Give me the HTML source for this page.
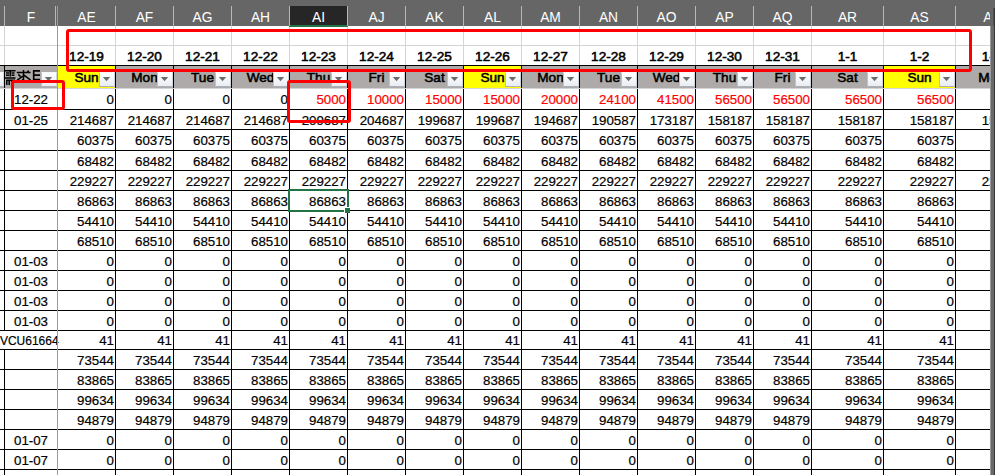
<!DOCTYPE html>
<html><head><meta charset="utf-8"><style>
html,body{margin:0;padding:0;}
body{width:995px;height:475px;overflow:hidden;background:#fff;position:relative;font-family:"Liberation Sans",sans-serif;}
.r{position:absolute;}
.t{position:absolute;white-space:nowrap;}
.d{-webkit-text-stroke:0.2px currentColor;}
.sb{font-weight:normal!important;-webkit-text-stroke:0.55px currentColor;}
.btn{position:absolute;width:14px;height:13px;border:1px solid #bcc2cc;border-top-color:#f4f6f9;border-right-color:#d0d5dd;border-bottom-color:#aab1bc;background:linear-gradient(#ffffff,#e9edf3);}
.tri{position:absolute;left:3.5px;top:4px;width:0;height:0;border-left:3.5px solid transparent;border-right:3.5px solid transparent;border-top:4.5px solid #6d6d6d;}
</style></head><body>
<div class="r" style="left:0px;top:45px;width:995px;height:1px;background:#d4d4d4;"></div>
<div class="r" style="left:4px;top:26px;width:1px;height:39px;background:#d4d4d4;"></div>
<div class="r" style="left:57px;top:26px;width:1px;height:39px;background:#d4d4d4;"></div>
<div class="r" style="left:115px;top:26px;width:1px;height:39px;background:#d4d4d4;"></div>
<div class="r" style="left:173px;top:26px;width:1px;height:39px;background:#d4d4d4;"></div>
<div class="r" style="left:231px;top:26px;width:1px;height:39px;background:#d4d4d4;"></div>
<div class="r" style="left:289px;top:26px;width:1px;height:39px;background:#d4d4d4;"></div>
<div class="r" style="left:347px;top:26px;width:1px;height:39px;background:#d4d4d4;"></div>
<div class="r" style="left:405px;top:26px;width:1px;height:39px;background:#d4d4d4;"></div>
<div class="r" style="left:463px;top:26px;width:1px;height:39px;background:#d4d4d4;"></div>
<div class="r" style="left:521px;top:26px;width:1px;height:39px;background:#d4d4d4;"></div>
<div class="r" style="left:579px;top:26px;width:1px;height:39px;background:#d4d4d4;"></div>
<div class="r" style="left:637px;top:26px;width:1px;height:39px;background:#d4d4d4;"></div>
<div class="r" style="left:695px;top:26px;width:1px;height:39px;background:#d4d4d4;"></div>
<div class="r" style="left:753px;top:26px;width:1px;height:39px;background:#d4d4d4;"></div>
<div class="r" style="left:811px;top:26px;width:1px;height:39px;background:#d4d4d4;"></div>
<div class="r" style="left:883px;top:26px;width:1px;height:39px;background:#d4d4d4;"></div>
<div class="r" style="left:955px;top:26px;width:1px;height:39px;background:#d4d4d4;"></div>
<div class="r" style="left:0px;top:65px;width:995px;height:1px;background:#000;"></div>
<div class="r" style="left:0px;top:66px;width:995px;height:22px;background:#aeaaa9;"></div>
<div class="r" style="left:0px;top:88px;width:995px;height:1px;background:#d4d4d4;"></div>
<div class="r" style="left:58px;top:66px;width:57px;height:22px;background:#ffff00;"></div>
<div class="r" style="left:464px;top:66px;width:57px;height:22px;background:#ffff00;"></div>
<div class="r" style="left:884px;top:66px;width:71px;height:22px;background:#ffff00;"></div>
<div class="r" style="left:4px;top:65px;width:1px;height:23px;background:#000;"></div>
<div class="r" style="left:57px;top:65px;width:1px;height:23px;background:#000;"></div>
<div class="r" style="left:115px;top:65px;width:1px;height:23px;background:#000;"></div>
<div class="r" style="left:173px;top:65px;width:1px;height:23px;background:#000;"></div>
<div class="r" style="left:231px;top:65px;width:1px;height:23px;background:#000;"></div>
<div class="r" style="left:289px;top:65px;width:1px;height:23px;background:#000;"></div>
<div class="r" style="left:347px;top:65px;width:1px;height:23px;background:#000;"></div>
<div class="r" style="left:405px;top:65px;width:1px;height:23px;background:#000;"></div>
<div class="r" style="left:463px;top:65px;width:1px;height:23px;background:#000;"></div>
<div class="r" style="left:521px;top:65px;width:1px;height:23px;background:#000;"></div>
<div class="r" style="left:579px;top:65px;width:1px;height:23px;background:#000;"></div>
<div class="r" style="left:637px;top:65px;width:1px;height:23px;background:#000;"></div>
<div class="r" style="left:695px;top:65px;width:1px;height:23px;background:#000;"></div>
<div class="r" style="left:753px;top:65px;width:1px;height:23px;background:#000;"></div>
<div class="r" style="left:811px;top:65px;width:1px;height:23px;background:#000;"></div>
<div class="r" style="left:883px;top:65px;width:1px;height:23px;background:#000;"></div>
<div class="r" style="left:955px;top:65px;width:1px;height:23px;background:#000;"></div>
<div class="r" style="left:0px;top:109px;width:995px;height:1px;background:#000;"></div>
<div class="r" style="left:0px;top:129px;width:995px;height:1px;background:#000;"></div>
<div class="r" style="left:0px;top:150px;width:995px;height:1px;background:#000;"></div>
<div class="r" style="left:0px;top:170px;width:995px;height:1px;background:#000;"></div>
<div class="r" style="left:0px;top:190px;width:995px;height:1px;background:#000;"></div>
<div class="r" style="left:0px;top:210px;width:995px;height:1px;background:#000;"></div>
<div class="r" style="left:0px;top:230px;width:995px;height:1px;background:#000;"></div>
<div class="r" style="left:0px;top:250px;width:995px;height:1px;background:#000;"></div>
<div class="r" style="left:0px;top:270px;width:995px;height:1px;background:#000;"></div>
<div class="r" style="left:0px;top:290px;width:995px;height:1px;background:#000;"></div>
<div class="r" style="left:0px;top:310px;width:995px;height:1px;background:#000;"></div>
<div class="r" style="left:0px;top:330px;width:995px;height:1px;background:#000;"></div>
<div class="r" style="left:0px;top:349px;width:995px;height:1px;background:#000;"></div>
<div class="r" style="left:0px;top:369px;width:995px;height:1px;background:#000;"></div>
<div class="r" style="left:0px;top:389px;width:995px;height:1px;background:#000;"></div>
<div class="r" style="left:0px;top:409px;width:995px;height:1px;background:#000;"></div>
<div class="r" style="left:0px;top:429px;width:995px;height:1px;background:#000;"></div>
<div class="r" style="left:0px;top:449px;width:995px;height:1px;background:#000;"></div>
<div class="r" style="left:0px;top:469px;width:995px;height:1px;background:#000;"></div>
<div class="r" style="left:4px;top:89px;width:1px;height:21px;background:#000;"></div>
<div class="r" style="left:57px;top:89px;width:1px;height:21px;background:#000;"></div>
<div class="r" style="left:115px;top:89px;width:1px;height:21px;background:#000;"></div>
<div class="r" style="left:173px;top:89px;width:1px;height:21px;background:#000;"></div>
<div class="r" style="left:231px;top:89px;width:1px;height:21px;background:#000;"></div>
<div class="r" style="left:289px;top:89px;width:1px;height:21px;background:#000;"></div>
<div class="r" style="left:347px;top:89px;width:1px;height:21px;background:#000;"></div>
<div class="r" style="left:405px;top:89px;width:1px;height:21px;background:#000;"></div>
<div class="r" style="left:463px;top:89px;width:1px;height:21px;background:#000;"></div>
<div class="r" style="left:521px;top:89px;width:1px;height:21px;background:#000;"></div>
<div class="r" style="left:579px;top:89px;width:1px;height:21px;background:#000;"></div>
<div class="r" style="left:637px;top:89px;width:1px;height:21px;background:#000;"></div>
<div class="r" style="left:695px;top:89px;width:1px;height:21px;background:#000;"></div>
<div class="r" style="left:753px;top:89px;width:1px;height:21px;background:#000;"></div>
<div class="r" style="left:811px;top:89px;width:1px;height:21px;background:#000;"></div>
<div class="r" style="left:883px;top:89px;width:1px;height:21px;background:#000;"></div>
<div class="r" style="left:955px;top:89px;width:1px;height:21px;background:#000;"></div>
<div class="r" style="left:4px;top:109px;width:1px;height:21px;background:#000;"></div>
<div class="r" style="left:57px;top:109px;width:1px;height:21px;background:#000;"></div>
<div class="r" style="left:115px;top:109px;width:1px;height:21px;background:#000;"></div>
<div class="r" style="left:173px;top:109px;width:1px;height:21px;background:#000;"></div>
<div class="r" style="left:231px;top:109px;width:1px;height:21px;background:#000;"></div>
<div class="r" style="left:289px;top:109px;width:1px;height:21px;background:#000;"></div>
<div class="r" style="left:347px;top:109px;width:1px;height:21px;background:#000;"></div>
<div class="r" style="left:405px;top:109px;width:1px;height:21px;background:#000;"></div>
<div class="r" style="left:463px;top:109px;width:1px;height:21px;background:#000;"></div>
<div class="r" style="left:521px;top:109px;width:1px;height:21px;background:#000;"></div>
<div class="r" style="left:579px;top:109px;width:1px;height:21px;background:#000;"></div>
<div class="r" style="left:637px;top:109px;width:1px;height:21px;background:#000;"></div>
<div class="r" style="left:695px;top:109px;width:1px;height:21px;background:#000;"></div>
<div class="r" style="left:753px;top:109px;width:1px;height:21px;background:#000;"></div>
<div class="r" style="left:811px;top:109px;width:1px;height:21px;background:#000;"></div>
<div class="r" style="left:883px;top:109px;width:1px;height:21px;background:#000;"></div>
<div class="r" style="left:955px;top:109px;width:1px;height:21px;background:#000;"></div>
<div class="r" style="left:4px;top:129px;width:1px;height:22px;background:#000;"></div>
<div class="r" style="left:57px;top:129px;width:1px;height:22px;background:#000;"></div>
<div class="r" style="left:115px;top:129px;width:1px;height:22px;background:#000;"></div>
<div class="r" style="left:173px;top:129px;width:1px;height:22px;background:#000;"></div>
<div class="r" style="left:231px;top:129px;width:1px;height:22px;background:#000;"></div>
<div class="r" style="left:289px;top:129px;width:1px;height:22px;background:#000;"></div>
<div class="r" style="left:347px;top:129px;width:1px;height:22px;background:#000;"></div>
<div class="r" style="left:405px;top:129px;width:1px;height:22px;background:#000;"></div>
<div class="r" style="left:463px;top:129px;width:1px;height:22px;background:#000;"></div>
<div class="r" style="left:521px;top:129px;width:1px;height:22px;background:#000;"></div>
<div class="r" style="left:579px;top:129px;width:1px;height:22px;background:#000;"></div>
<div class="r" style="left:637px;top:129px;width:1px;height:22px;background:#000;"></div>
<div class="r" style="left:695px;top:129px;width:1px;height:22px;background:#000;"></div>
<div class="r" style="left:753px;top:129px;width:1px;height:22px;background:#000;"></div>
<div class="r" style="left:811px;top:129px;width:1px;height:22px;background:#000;"></div>
<div class="r" style="left:883px;top:129px;width:1px;height:22px;background:#000;"></div>
<div class="r" style="left:955px;top:129px;width:1px;height:22px;background:#000;"></div>
<div class="r" style="left:4px;top:150px;width:1px;height:21px;background:#000;"></div>
<div class="r" style="left:57px;top:150px;width:1px;height:21px;background:#000;"></div>
<div class="r" style="left:115px;top:150px;width:1px;height:21px;background:#000;"></div>
<div class="r" style="left:173px;top:150px;width:1px;height:21px;background:#000;"></div>
<div class="r" style="left:231px;top:150px;width:1px;height:21px;background:#000;"></div>
<div class="r" style="left:289px;top:150px;width:1px;height:21px;background:#000;"></div>
<div class="r" style="left:347px;top:150px;width:1px;height:21px;background:#000;"></div>
<div class="r" style="left:405px;top:150px;width:1px;height:21px;background:#000;"></div>
<div class="r" style="left:463px;top:150px;width:1px;height:21px;background:#000;"></div>
<div class="r" style="left:521px;top:150px;width:1px;height:21px;background:#000;"></div>
<div class="r" style="left:579px;top:150px;width:1px;height:21px;background:#000;"></div>
<div class="r" style="left:637px;top:150px;width:1px;height:21px;background:#000;"></div>
<div class="r" style="left:695px;top:150px;width:1px;height:21px;background:#000;"></div>
<div class="r" style="left:753px;top:150px;width:1px;height:21px;background:#000;"></div>
<div class="r" style="left:811px;top:150px;width:1px;height:21px;background:#000;"></div>
<div class="r" style="left:883px;top:150px;width:1px;height:21px;background:#000;"></div>
<div class="r" style="left:955px;top:150px;width:1px;height:21px;background:#000;"></div>
<div class="r" style="left:4px;top:170px;width:1px;height:21px;background:#000;"></div>
<div class="r" style="left:57px;top:170px;width:1px;height:21px;background:#000;"></div>
<div class="r" style="left:115px;top:170px;width:1px;height:21px;background:#000;"></div>
<div class="r" style="left:173px;top:170px;width:1px;height:21px;background:#000;"></div>
<div class="r" style="left:231px;top:170px;width:1px;height:21px;background:#000;"></div>
<div class="r" style="left:289px;top:170px;width:1px;height:21px;background:#000;"></div>
<div class="r" style="left:347px;top:170px;width:1px;height:21px;background:#000;"></div>
<div class="r" style="left:405px;top:170px;width:1px;height:21px;background:#000;"></div>
<div class="r" style="left:463px;top:170px;width:1px;height:21px;background:#000;"></div>
<div class="r" style="left:521px;top:170px;width:1px;height:21px;background:#000;"></div>
<div class="r" style="left:579px;top:170px;width:1px;height:21px;background:#000;"></div>
<div class="r" style="left:637px;top:170px;width:1px;height:21px;background:#000;"></div>
<div class="r" style="left:695px;top:170px;width:1px;height:21px;background:#000;"></div>
<div class="r" style="left:753px;top:170px;width:1px;height:21px;background:#000;"></div>
<div class="r" style="left:811px;top:170px;width:1px;height:21px;background:#000;"></div>
<div class="r" style="left:883px;top:170px;width:1px;height:21px;background:#000;"></div>
<div class="r" style="left:955px;top:170px;width:1px;height:21px;background:#000;"></div>
<div class="r" style="left:4px;top:190px;width:1px;height:21px;background:#000;"></div>
<div class="r" style="left:57px;top:190px;width:1px;height:21px;background:#000;"></div>
<div class="r" style="left:115px;top:190px;width:1px;height:21px;background:#000;"></div>
<div class="r" style="left:173px;top:190px;width:1px;height:21px;background:#000;"></div>
<div class="r" style="left:231px;top:190px;width:1px;height:21px;background:#000;"></div>
<div class="r" style="left:289px;top:190px;width:1px;height:21px;background:#000;"></div>
<div class="r" style="left:347px;top:190px;width:1px;height:21px;background:#000;"></div>
<div class="r" style="left:405px;top:190px;width:1px;height:21px;background:#000;"></div>
<div class="r" style="left:463px;top:190px;width:1px;height:21px;background:#000;"></div>
<div class="r" style="left:521px;top:190px;width:1px;height:21px;background:#000;"></div>
<div class="r" style="left:579px;top:190px;width:1px;height:21px;background:#000;"></div>
<div class="r" style="left:637px;top:190px;width:1px;height:21px;background:#000;"></div>
<div class="r" style="left:695px;top:190px;width:1px;height:21px;background:#000;"></div>
<div class="r" style="left:753px;top:190px;width:1px;height:21px;background:#000;"></div>
<div class="r" style="left:811px;top:190px;width:1px;height:21px;background:#000;"></div>
<div class="r" style="left:883px;top:190px;width:1px;height:21px;background:#000;"></div>
<div class="r" style="left:955px;top:190px;width:1px;height:21px;background:#000;"></div>
<div class="r" style="left:4px;top:210px;width:1px;height:21px;background:#000;"></div>
<div class="r" style="left:57px;top:210px;width:1px;height:21px;background:#000;"></div>
<div class="r" style="left:115px;top:210px;width:1px;height:21px;background:#000;"></div>
<div class="r" style="left:173px;top:210px;width:1px;height:21px;background:#000;"></div>
<div class="r" style="left:231px;top:210px;width:1px;height:21px;background:#000;"></div>
<div class="r" style="left:289px;top:210px;width:1px;height:21px;background:#000;"></div>
<div class="r" style="left:347px;top:210px;width:1px;height:21px;background:#000;"></div>
<div class="r" style="left:405px;top:210px;width:1px;height:21px;background:#000;"></div>
<div class="r" style="left:463px;top:210px;width:1px;height:21px;background:#000;"></div>
<div class="r" style="left:521px;top:210px;width:1px;height:21px;background:#000;"></div>
<div class="r" style="left:579px;top:210px;width:1px;height:21px;background:#000;"></div>
<div class="r" style="left:637px;top:210px;width:1px;height:21px;background:#000;"></div>
<div class="r" style="left:695px;top:210px;width:1px;height:21px;background:#000;"></div>
<div class="r" style="left:753px;top:210px;width:1px;height:21px;background:#000;"></div>
<div class="r" style="left:811px;top:210px;width:1px;height:21px;background:#000;"></div>
<div class="r" style="left:883px;top:210px;width:1px;height:21px;background:#000;"></div>
<div class="r" style="left:955px;top:210px;width:1px;height:21px;background:#000;"></div>
<div class="r" style="left:4px;top:230px;width:1px;height:21px;background:#000;"></div>
<div class="r" style="left:57px;top:230px;width:1px;height:21px;background:#000;"></div>
<div class="r" style="left:115px;top:230px;width:1px;height:21px;background:#000;"></div>
<div class="r" style="left:173px;top:230px;width:1px;height:21px;background:#000;"></div>
<div class="r" style="left:231px;top:230px;width:1px;height:21px;background:#000;"></div>
<div class="r" style="left:289px;top:230px;width:1px;height:21px;background:#000;"></div>
<div class="r" style="left:347px;top:230px;width:1px;height:21px;background:#000;"></div>
<div class="r" style="left:405px;top:230px;width:1px;height:21px;background:#000;"></div>
<div class="r" style="left:463px;top:230px;width:1px;height:21px;background:#000;"></div>
<div class="r" style="left:521px;top:230px;width:1px;height:21px;background:#000;"></div>
<div class="r" style="left:579px;top:230px;width:1px;height:21px;background:#000;"></div>
<div class="r" style="left:637px;top:230px;width:1px;height:21px;background:#000;"></div>
<div class="r" style="left:695px;top:230px;width:1px;height:21px;background:#000;"></div>
<div class="r" style="left:753px;top:230px;width:1px;height:21px;background:#000;"></div>
<div class="r" style="left:811px;top:230px;width:1px;height:21px;background:#000;"></div>
<div class="r" style="left:883px;top:230px;width:1px;height:21px;background:#000;"></div>
<div class="r" style="left:955px;top:230px;width:1px;height:21px;background:#000;"></div>
<div class="r" style="left:4px;top:250px;width:1px;height:21px;background:#000;"></div>
<div class="r" style="left:57px;top:250px;width:1px;height:21px;background:#000;"></div>
<div class="r" style="left:115px;top:250px;width:1px;height:21px;background:#000;"></div>
<div class="r" style="left:173px;top:250px;width:1px;height:21px;background:#000;"></div>
<div class="r" style="left:231px;top:250px;width:1px;height:21px;background:#000;"></div>
<div class="r" style="left:289px;top:250px;width:1px;height:21px;background:#000;"></div>
<div class="r" style="left:347px;top:250px;width:1px;height:21px;background:#000;"></div>
<div class="r" style="left:405px;top:250px;width:1px;height:21px;background:#000;"></div>
<div class="r" style="left:463px;top:250px;width:1px;height:21px;background:#000;"></div>
<div class="r" style="left:521px;top:250px;width:1px;height:21px;background:#000;"></div>
<div class="r" style="left:579px;top:250px;width:1px;height:21px;background:#000;"></div>
<div class="r" style="left:637px;top:250px;width:1px;height:21px;background:#000;"></div>
<div class="r" style="left:695px;top:250px;width:1px;height:21px;background:#000;"></div>
<div class="r" style="left:753px;top:250px;width:1px;height:21px;background:#000;"></div>
<div class="r" style="left:811px;top:250px;width:1px;height:21px;background:#000;"></div>
<div class="r" style="left:883px;top:250px;width:1px;height:21px;background:#000;"></div>
<div class="r" style="left:955px;top:250px;width:1px;height:21px;background:#000;"></div>
<div class="r" style="left:4px;top:270px;width:1px;height:21px;background:#000;"></div>
<div class="r" style="left:57px;top:270px;width:1px;height:21px;background:#000;"></div>
<div class="r" style="left:115px;top:270px;width:1px;height:21px;background:#000;"></div>
<div class="r" style="left:173px;top:270px;width:1px;height:21px;background:#000;"></div>
<div class="r" style="left:231px;top:270px;width:1px;height:21px;background:#000;"></div>
<div class="r" style="left:289px;top:270px;width:1px;height:21px;background:#000;"></div>
<div class="r" style="left:347px;top:270px;width:1px;height:21px;background:#000;"></div>
<div class="r" style="left:405px;top:270px;width:1px;height:21px;background:#000;"></div>
<div class="r" style="left:463px;top:270px;width:1px;height:21px;background:#000;"></div>
<div class="r" style="left:521px;top:270px;width:1px;height:21px;background:#000;"></div>
<div class="r" style="left:579px;top:270px;width:1px;height:21px;background:#000;"></div>
<div class="r" style="left:637px;top:270px;width:1px;height:21px;background:#000;"></div>
<div class="r" style="left:695px;top:270px;width:1px;height:21px;background:#000;"></div>
<div class="r" style="left:753px;top:270px;width:1px;height:21px;background:#000;"></div>
<div class="r" style="left:811px;top:270px;width:1px;height:21px;background:#000;"></div>
<div class="r" style="left:883px;top:270px;width:1px;height:21px;background:#000;"></div>
<div class="r" style="left:955px;top:270px;width:1px;height:21px;background:#000;"></div>
<div class="r" style="left:4px;top:290px;width:1px;height:21px;background:#000;"></div>
<div class="r" style="left:57px;top:290px;width:1px;height:21px;background:#000;"></div>
<div class="r" style="left:115px;top:290px;width:1px;height:21px;background:#000;"></div>
<div class="r" style="left:173px;top:290px;width:1px;height:21px;background:#000;"></div>
<div class="r" style="left:231px;top:290px;width:1px;height:21px;background:#000;"></div>
<div class="r" style="left:289px;top:290px;width:1px;height:21px;background:#000;"></div>
<div class="r" style="left:347px;top:290px;width:1px;height:21px;background:#000;"></div>
<div class="r" style="left:405px;top:290px;width:1px;height:21px;background:#000;"></div>
<div class="r" style="left:463px;top:290px;width:1px;height:21px;background:#000;"></div>
<div class="r" style="left:521px;top:290px;width:1px;height:21px;background:#000;"></div>
<div class="r" style="left:579px;top:290px;width:1px;height:21px;background:#000;"></div>
<div class="r" style="left:637px;top:290px;width:1px;height:21px;background:#000;"></div>
<div class="r" style="left:695px;top:290px;width:1px;height:21px;background:#000;"></div>
<div class="r" style="left:753px;top:290px;width:1px;height:21px;background:#000;"></div>
<div class="r" style="left:811px;top:290px;width:1px;height:21px;background:#000;"></div>
<div class="r" style="left:883px;top:290px;width:1px;height:21px;background:#000;"></div>
<div class="r" style="left:955px;top:290px;width:1px;height:21px;background:#000;"></div>
<div class="r" style="left:4px;top:310px;width:1px;height:21px;background:#000;"></div>
<div class="r" style="left:57px;top:310px;width:1px;height:21px;background:#000;"></div>
<div class="r" style="left:115px;top:310px;width:1px;height:21px;background:#000;"></div>
<div class="r" style="left:173px;top:310px;width:1px;height:21px;background:#000;"></div>
<div class="r" style="left:231px;top:310px;width:1px;height:21px;background:#000;"></div>
<div class="r" style="left:289px;top:310px;width:1px;height:21px;background:#000;"></div>
<div class="r" style="left:347px;top:310px;width:1px;height:21px;background:#000;"></div>
<div class="r" style="left:405px;top:310px;width:1px;height:21px;background:#000;"></div>
<div class="r" style="left:463px;top:310px;width:1px;height:21px;background:#000;"></div>
<div class="r" style="left:521px;top:310px;width:1px;height:21px;background:#000;"></div>
<div class="r" style="left:579px;top:310px;width:1px;height:21px;background:#000;"></div>
<div class="r" style="left:637px;top:310px;width:1px;height:21px;background:#000;"></div>
<div class="r" style="left:695px;top:310px;width:1px;height:21px;background:#000;"></div>
<div class="r" style="left:753px;top:310px;width:1px;height:21px;background:#000;"></div>
<div class="r" style="left:811px;top:310px;width:1px;height:21px;background:#000;"></div>
<div class="r" style="left:883px;top:310px;width:1px;height:21px;background:#000;"></div>
<div class="r" style="left:955px;top:310px;width:1px;height:21px;background:#000;"></div>
<div class="r" style="left:57px;top:330px;width:1px;height:20px;background:#000;"></div>
<div class="r" style="left:115px;top:330px;width:1px;height:20px;background:#000;"></div>
<div class="r" style="left:173px;top:330px;width:1px;height:20px;background:#000;"></div>
<div class="r" style="left:231px;top:330px;width:1px;height:20px;background:#000;"></div>
<div class="r" style="left:289px;top:330px;width:1px;height:20px;background:#000;"></div>
<div class="r" style="left:347px;top:330px;width:1px;height:20px;background:#000;"></div>
<div class="r" style="left:405px;top:330px;width:1px;height:20px;background:#000;"></div>
<div class="r" style="left:463px;top:330px;width:1px;height:20px;background:#000;"></div>
<div class="r" style="left:521px;top:330px;width:1px;height:20px;background:#000;"></div>
<div class="r" style="left:579px;top:330px;width:1px;height:20px;background:#000;"></div>
<div class="r" style="left:637px;top:330px;width:1px;height:20px;background:#000;"></div>
<div class="r" style="left:695px;top:330px;width:1px;height:20px;background:#000;"></div>
<div class="r" style="left:753px;top:330px;width:1px;height:20px;background:#000;"></div>
<div class="r" style="left:811px;top:330px;width:1px;height:20px;background:#000;"></div>
<div class="r" style="left:883px;top:330px;width:1px;height:20px;background:#000;"></div>
<div class="r" style="left:955px;top:330px;width:1px;height:20px;background:#000;"></div>
<div class="r" style="left:4px;top:349px;width:1px;height:21px;background:#000;"></div>
<div class="r" style="left:57px;top:349px;width:1px;height:21px;background:#000;"></div>
<div class="r" style="left:115px;top:349px;width:1px;height:21px;background:#000;"></div>
<div class="r" style="left:173px;top:349px;width:1px;height:21px;background:#000;"></div>
<div class="r" style="left:231px;top:349px;width:1px;height:21px;background:#000;"></div>
<div class="r" style="left:289px;top:349px;width:1px;height:21px;background:#000;"></div>
<div class="r" style="left:347px;top:349px;width:1px;height:21px;background:#000;"></div>
<div class="r" style="left:405px;top:349px;width:1px;height:21px;background:#000;"></div>
<div class="r" style="left:463px;top:349px;width:1px;height:21px;background:#000;"></div>
<div class="r" style="left:521px;top:349px;width:1px;height:21px;background:#000;"></div>
<div class="r" style="left:579px;top:349px;width:1px;height:21px;background:#000;"></div>
<div class="r" style="left:637px;top:349px;width:1px;height:21px;background:#000;"></div>
<div class="r" style="left:695px;top:349px;width:1px;height:21px;background:#000;"></div>
<div class="r" style="left:753px;top:349px;width:1px;height:21px;background:#000;"></div>
<div class="r" style="left:811px;top:349px;width:1px;height:21px;background:#000;"></div>
<div class="r" style="left:883px;top:349px;width:1px;height:21px;background:#000;"></div>
<div class="r" style="left:955px;top:349px;width:1px;height:21px;background:#000;"></div>
<div class="r" style="left:4px;top:369px;width:1px;height:21px;background:#000;"></div>
<div class="r" style="left:57px;top:369px;width:1px;height:21px;background:#000;"></div>
<div class="r" style="left:115px;top:369px;width:1px;height:21px;background:#000;"></div>
<div class="r" style="left:173px;top:369px;width:1px;height:21px;background:#000;"></div>
<div class="r" style="left:231px;top:369px;width:1px;height:21px;background:#000;"></div>
<div class="r" style="left:289px;top:369px;width:1px;height:21px;background:#000;"></div>
<div class="r" style="left:347px;top:369px;width:1px;height:21px;background:#000;"></div>
<div class="r" style="left:405px;top:369px;width:1px;height:21px;background:#000;"></div>
<div class="r" style="left:463px;top:369px;width:1px;height:21px;background:#000;"></div>
<div class="r" style="left:521px;top:369px;width:1px;height:21px;background:#000;"></div>
<div class="r" style="left:579px;top:369px;width:1px;height:21px;background:#000;"></div>
<div class="r" style="left:637px;top:369px;width:1px;height:21px;background:#000;"></div>
<div class="r" style="left:695px;top:369px;width:1px;height:21px;background:#000;"></div>
<div class="r" style="left:753px;top:369px;width:1px;height:21px;background:#000;"></div>
<div class="r" style="left:811px;top:369px;width:1px;height:21px;background:#000;"></div>
<div class="r" style="left:883px;top:369px;width:1px;height:21px;background:#000;"></div>
<div class="r" style="left:955px;top:369px;width:1px;height:21px;background:#000;"></div>
<div class="r" style="left:4px;top:389px;width:1px;height:21px;background:#000;"></div>
<div class="r" style="left:57px;top:389px;width:1px;height:21px;background:#000;"></div>
<div class="r" style="left:115px;top:389px;width:1px;height:21px;background:#000;"></div>
<div class="r" style="left:173px;top:389px;width:1px;height:21px;background:#000;"></div>
<div class="r" style="left:231px;top:389px;width:1px;height:21px;background:#000;"></div>
<div class="r" style="left:289px;top:389px;width:1px;height:21px;background:#000;"></div>
<div class="r" style="left:347px;top:389px;width:1px;height:21px;background:#000;"></div>
<div class="r" style="left:405px;top:389px;width:1px;height:21px;background:#000;"></div>
<div class="r" style="left:463px;top:389px;width:1px;height:21px;background:#000;"></div>
<div class="r" style="left:521px;top:389px;width:1px;height:21px;background:#000;"></div>
<div class="r" style="left:579px;top:389px;width:1px;height:21px;background:#000;"></div>
<div class="r" style="left:637px;top:389px;width:1px;height:21px;background:#000;"></div>
<div class="r" style="left:695px;top:389px;width:1px;height:21px;background:#000;"></div>
<div class="r" style="left:753px;top:389px;width:1px;height:21px;background:#000;"></div>
<div class="r" style="left:811px;top:389px;width:1px;height:21px;background:#000;"></div>
<div class="r" style="left:883px;top:389px;width:1px;height:21px;background:#000;"></div>
<div class="r" style="left:955px;top:389px;width:1px;height:21px;background:#000;"></div>
<div class="r" style="left:4px;top:409px;width:1px;height:21px;background:#000;"></div>
<div class="r" style="left:57px;top:409px;width:1px;height:21px;background:#000;"></div>
<div class="r" style="left:115px;top:409px;width:1px;height:21px;background:#000;"></div>
<div class="r" style="left:173px;top:409px;width:1px;height:21px;background:#000;"></div>
<div class="r" style="left:231px;top:409px;width:1px;height:21px;background:#000;"></div>
<div class="r" style="left:289px;top:409px;width:1px;height:21px;background:#000;"></div>
<div class="r" style="left:347px;top:409px;width:1px;height:21px;background:#000;"></div>
<div class="r" style="left:405px;top:409px;width:1px;height:21px;background:#000;"></div>
<div class="r" style="left:463px;top:409px;width:1px;height:21px;background:#000;"></div>
<div class="r" style="left:521px;top:409px;width:1px;height:21px;background:#000;"></div>
<div class="r" style="left:579px;top:409px;width:1px;height:21px;background:#000;"></div>
<div class="r" style="left:637px;top:409px;width:1px;height:21px;background:#000;"></div>
<div class="r" style="left:695px;top:409px;width:1px;height:21px;background:#000;"></div>
<div class="r" style="left:753px;top:409px;width:1px;height:21px;background:#000;"></div>
<div class="r" style="left:811px;top:409px;width:1px;height:21px;background:#000;"></div>
<div class="r" style="left:883px;top:409px;width:1px;height:21px;background:#000;"></div>
<div class="r" style="left:955px;top:409px;width:1px;height:21px;background:#000;"></div>
<div class="r" style="left:4px;top:429px;width:1px;height:21px;background:#000;"></div>
<div class="r" style="left:57px;top:429px;width:1px;height:21px;background:#000;"></div>
<div class="r" style="left:115px;top:429px;width:1px;height:21px;background:#000;"></div>
<div class="r" style="left:173px;top:429px;width:1px;height:21px;background:#000;"></div>
<div class="r" style="left:231px;top:429px;width:1px;height:21px;background:#000;"></div>
<div class="r" style="left:289px;top:429px;width:1px;height:21px;background:#000;"></div>
<div class="r" style="left:347px;top:429px;width:1px;height:21px;background:#000;"></div>
<div class="r" style="left:405px;top:429px;width:1px;height:21px;background:#000;"></div>
<div class="r" style="left:463px;top:429px;width:1px;height:21px;background:#000;"></div>
<div class="r" style="left:521px;top:429px;width:1px;height:21px;background:#000;"></div>
<div class="r" style="left:579px;top:429px;width:1px;height:21px;background:#000;"></div>
<div class="r" style="left:637px;top:429px;width:1px;height:21px;background:#000;"></div>
<div class="r" style="left:695px;top:429px;width:1px;height:21px;background:#000;"></div>
<div class="r" style="left:753px;top:429px;width:1px;height:21px;background:#000;"></div>
<div class="r" style="left:811px;top:429px;width:1px;height:21px;background:#000;"></div>
<div class="r" style="left:883px;top:429px;width:1px;height:21px;background:#000;"></div>
<div class="r" style="left:955px;top:429px;width:1px;height:21px;background:#000;"></div>
<div class="r" style="left:4px;top:449px;width:1px;height:21px;background:#000;"></div>
<div class="r" style="left:57px;top:449px;width:1px;height:21px;background:#000;"></div>
<div class="r" style="left:115px;top:449px;width:1px;height:21px;background:#000;"></div>
<div class="r" style="left:173px;top:449px;width:1px;height:21px;background:#000;"></div>
<div class="r" style="left:231px;top:449px;width:1px;height:21px;background:#000;"></div>
<div class="r" style="left:289px;top:449px;width:1px;height:21px;background:#000;"></div>
<div class="r" style="left:347px;top:449px;width:1px;height:21px;background:#000;"></div>
<div class="r" style="left:405px;top:449px;width:1px;height:21px;background:#000;"></div>
<div class="r" style="left:463px;top:449px;width:1px;height:21px;background:#000;"></div>
<div class="r" style="left:521px;top:449px;width:1px;height:21px;background:#000;"></div>
<div class="r" style="left:579px;top:449px;width:1px;height:21px;background:#000;"></div>
<div class="r" style="left:637px;top:449px;width:1px;height:21px;background:#000;"></div>
<div class="r" style="left:695px;top:449px;width:1px;height:21px;background:#000;"></div>
<div class="r" style="left:753px;top:449px;width:1px;height:21px;background:#000;"></div>
<div class="r" style="left:811px;top:449px;width:1px;height:21px;background:#000;"></div>
<div class="r" style="left:883px;top:449px;width:1px;height:21px;background:#000;"></div>
<div class="r" style="left:955px;top:449px;width:1px;height:21px;background:#000;"></div>
<div class="r" style="left:4px;top:469px;width:1px;height:6px;background:#000;"></div>
<div class="r" style="left:57px;top:469px;width:1px;height:6px;background:#000;"></div>
<div class="r" style="left:115px;top:469px;width:1px;height:6px;background:#000;"></div>
<div class="r" style="left:173px;top:469px;width:1px;height:6px;background:#000;"></div>
<div class="r" style="left:231px;top:469px;width:1px;height:6px;background:#000;"></div>
<div class="r" style="left:289px;top:469px;width:1px;height:6px;background:#000;"></div>
<div class="r" style="left:347px;top:469px;width:1px;height:6px;background:#000;"></div>
<div class="r" style="left:405px;top:469px;width:1px;height:6px;background:#000;"></div>
<div class="r" style="left:463px;top:469px;width:1px;height:6px;background:#000;"></div>
<div class="r" style="left:521px;top:469px;width:1px;height:6px;background:#000;"></div>
<div class="r" style="left:579px;top:469px;width:1px;height:6px;background:#000;"></div>
<div class="r" style="left:637px;top:469px;width:1px;height:6px;background:#000;"></div>
<div class="r" style="left:695px;top:469px;width:1px;height:6px;background:#000;"></div>
<div class="r" style="left:753px;top:469px;width:1px;height:6px;background:#000;"></div>
<div class="r" style="left:811px;top:469px;width:1px;height:6px;background:#000;"></div>
<div class="r" style="left:883px;top:469px;width:1px;height:6px;background:#000;"></div>
<div class="r" style="left:955px;top:469px;width:1px;height:6px;background:#000;"></div>
<div class="t d" style="left:5px;width:52px;top:92.74px;font-size:13.3px;line-height:13.3px;font-weight:normal;color:#000;text-align:center;">12-22</div>
<div class="t d" style="left:57px;width:57px;top:92.74px;font-size:13.3px;line-height:13.3px;font-weight:normal;color:#000;text-align:right;">0</div>
<div class="t d" style="left:115px;width:57px;top:92.74px;font-size:13.3px;line-height:13.3px;font-weight:normal;color:#000;text-align:right;">0</div>
<div class="t d" style="left:173px;width:57px;top:92.74px;font-size:13.3px;line-height:13.3px;font-weight:normal;color:#000;text-align:right;">0</div>
<div class="t d" style="left:231px;width:57px;top:92.74px;font-size:13.3px;line-height:13.3px;font-weight:normal;color:#000;text-align:right;">0</div>
<div class="t d" style="left:289px;width:57px;top:92.74px;font-size:13.3px;line-height:13.3px;font-weight:normal;color:#ff0000;text-align:right;">5000</div>
<div class="t d" style="left:347px;width:57px;top:92.74px;font-size:13.3px;line-height:13.3px;font-weight:normal;color:#ff0000;text-align:right;">10000</div>
<div class="t d" style="left:405px;width:57px;top:92.74px;font-size:13.3px;line-height:13.3px;font-weight:normal;color:#ff0000;text-align:right;">15000</div>
<div class="t d" style="left:463px;width:57px;top:92.74px;font-size:13.3px;line-height:13.3px;font-weight:normal;color:#ff0000;text-align:right;">15000</div>
<div class="t d" style="left:521px;width:57px;top:92.74px;font-size:13.3px;line-height:13.3px;font-weight:normal;color:#ff0000;text-align:right;">20000</div>
<div class="t d" style="left:579px;width:57px;top:92.74px;font-size:13.3px;line-height:13.3px;font-weight:normal;color:#ff0000;text-align:right;">24100</div>
<div class="t d" style="left:637px;width:57px;top:92.74px;font-size:13.3px;line-height:13.3px;font-weight:normal;color:#ff0000;text-align:right;">41500</div>
<div class="t d" style="left:695px;width:57px;top:92.74px;font-size:13.3px;line-height:13.3px;font-weight:normal;color:#ff0000;text-align:right;">56500</div>
<div class="t d" style="left:753px;width:57px;top:92.74px;font-size:13.3px;line-height:13.3px;font-weight:normal;color:#ff0000;text-align:right;">56500</div>
<div class="t d" style="left:811px;width:71px;top:92.74px;font-size:13.3px;line-height:13.3px;font-weight:normal;color:#ff0000;text-align:right;">56500</div>
<div class="t d" style="left:883px;width:71px;top:92.74px;font-size:13.3px;line-height:13.3px;font-weight:normal;color:#ff0000;text-align:right;">56500</div>
<div class="t d" style="left:5px;width:52px;top:113.74px;font-size:13.3px;line-height:13.3px;font-weight:normal;color:#000;text-align:center;">01-25</div>
<div class="t d" style="left:57px;width:57px;top:113.74px;font-size:13.3px;line-height:13.3px;font-weight:normal;color:#000;text-align:right;">214687</div>
<div class="t d" style="left:115px;width:57px;top:113.74px;font-size:13.3px;line-height:13.3px;font-weight:normal;color:#000;text-align:right;">214687</div>
<div class="t d" style="left:173px;width:57px;top:113.74px;font-size:13.3px;line-height:13.3px;font-weight:normal;color:#000;text-align:right;">214687</div>
<div class="t d" style="left:231px;width:57px;top:113.74px;font-size:13.3px;line-height:13.3px;font-weight:normal;color:#000;text-align:right;">214687</div>
<div class="t d" style="left:289px;width:57px;top:113.74px;font-size:13.3px;line-height:13.3px;font-weight:normal;color:#000;text-align:right;">209687</div>
<div class="t d" style="left:347px;width:57px;top:113.74px;font-size:13.3px;line-height:13.3px;font-weight:normal;color:#000;text-align:right;">204687</div>
<div class="t d" style="left:405px;width:57px;top:113.74px;font-size:13.3px;line-height:13.3px;font-weight:normal;color:#000;text-align:right;">199687</div>
<div class="t d" style="left:463px;width:57px;top:113.74px;font-size:13.3px;line-height:13.3px;font-weight:normal;color:#000;text-align:right;">199687</div>
<div class="t d" style="left:521px;width:57px;top:113.74px;font-size:13.3px;line-height:13.3px;font-weight:normal;color:#000;text-align:right;">194687</div>
<div class="t d" style="left:579px;width:57px;top:113.74px;font-size:13.3px;line-height:13.3px;font-weight:normal;color:#000;text-align:right;">190587</div>
<div class="t d" style="left:637px;width:57px;top:113.74px;font-size:13.3px;line-height:13.3px;font-weight:normal;color:#000;text-align:right;">173187</div>
<div class="t d" style="left:695px;width:57px;top:113.74px;font-size:13.3px;line-height:13.3px;font-weight:normal;color:#000;text-align:right;">158187</div>
<div class="t d" style="left:753px;width:57px;top:113.74px;font-size:13.3px;line-height:13.3px;font-weight:normal;color:#000;text-align:right;">158187</div>
<div class="t d" style="left:811px;width:71px;top:113.74px;font-size:13.3px;line-height:13.3px;font-weight:normal;color:#000;text-align:right;">158187</div>
<div class="t d" style="left:883px;width:71px;top:113.74px;font-size:13.3px;line-height:13.3px;font-weight:normal;color:#000;text-align:right;">158187</div>
<div class="t d" style="left:955px;width:71px;top:113.74px;font-size:13.3px;line-height:13.3px;font-weight:normal;color:#000;text-align:right;">158187</div>
<div class="t d" style="left:57px;width:57px;top:133.74px;font-size:13.3px;line-height:13.3px;font-weight:normal;color:#000;text-align:right;">60375</div>
<div class="t d" style="left:115px;width:57px;top:133.74px;font-size:13.3px;line-height:13.3px;font-weight:normal;color:#000;text-align:right;">60375</div>
<div class="t d" style="left:173px;width:57px;top:133.74px;font-size:13.3px;line-height:13.3px;font-weight:normal;color:#000;text-align:right;">60375</div>
<div class="t d" style="left:231px;width:57px;top:133.74px;font-size:13.3px;line-height:13.3px;font-weight:normal;color:#000;text-align:right;">60375</div>
<div class="t d" style="left:289px;width:57px;top:133.74px;font-size:13.3px;line-height:13.3px;font-weight:normal;color:#000;text-align:right;">60375</div>
<div class="t d" style="left:347px;width:57px;top:133.74px;font-size:13.3px;line-height:13.3px;font-weight:normal;color:#000;text-align:right;">60375</div>
<div class="t d" style="left:405px;width:57px;top:133.74px;font-size:13.3px;line-height:13.3px;font-weight:normal;color:#000;text-align:right;">60375</div>
<div class="t d" style="left:463px;width:57px;top:133.74px;font-size:13.3px;line-height:13.3px;font-weight:normal;color:#000;text-align:right;">60375</div>
<div class="t d" style="left:521px;width:57px;top:133.74px;font-size:13.3px;line-height:13.3px;font-weight:normal;color:#000;text-align:right;">60375</div>
<div class="t d" style="left:579px;width:57px;top:133.74px;font-size:13.3px;line-height:13.3px;font-weight:normal;color:#000;text-align:right;">60375</div>
<div class="t d" style="left:637px;width:57px;top:133.74px;font-size:13.3px;line-height:13.3px;font-weight:normal;color:#000;text-align:right;">60375</div>
<div class="t d" style="left:695px;width:57px;top:133.74px;font-size:13.3px;line-height:13.3px;font-weight:normal;color:#000;text-align:right;">60375</div>
<div class="t d" style="left:753px;width:57px;top:133.74px;font-size:13.3px;line-height:13.3px;font-weight:normal;color:#000;text-align:right;">60375</div>
<div class="t d" style="left:811px;width:71px;top:133.74px;font-size:13.3px;line-height:13.3px;font-weight:normal;color:#000;text-align:right;">60375</div>
<div class="t d" style="left:883px;width:71px;top:133.74px;font-size:13.3px;line-height:13.3px;font-weight:normal;color:#000;text-align:right;">60375</div>
<div class="t d" style="left:57px;width:57px;top:154.74px;font-size:13.3px;line-height:13.3px;font-weight:normal;color:#000;text-align:right;">68482</div>
<div class="t d" style="left:115px;width:57px;top:154.74px;font-size:13.3px;line-height:13.3px;font-weight:normal;color:#000;text-align:right;">68482</div>
<div class="t d" style="left:173px;width:57px;top:154.74px;font-size:13.3px;line-height:13.3px;font-weight:normal;color:#000;text-align:right;">68482</div>
<div class="t d" style="left:231px;width:57px;top:154.74px;font-size:13.3px;line-height:13.3px;font-weight:normal;color:#000;text-align:right;">68482</div>
<div class="t d" style="left:289px;width:57px;top:154.74px;font-size:13.3px;line-height:13.3px;font-weight:normal;color:#000;text-align:right;">68482</div>
<div class="t d" style="left:347px;width:57px;top:154.74px;font-size:13.3px;line-height:13.3px;font-weight:normal;color:#000;text-align:right;">68482</div>
<div class="t d" style="left:405px;width:57px;top:154.74px;font-size:13.3px;line-height:13.3px;font-weight:normal;color:#000;text-align:right;">68482</div>
<div class="t d" style="left:463px;width:57px;top:154.74px;font-size:13.3px;line-height:13.3px;font-weight:normal;color:#000;text-align:right;">68482</div>
<div class="t d" style="left:521px;width:57px;top:154.74px;font-size:13.3px;line-height:13.3px;font-weight:normal;color:#000;text-align:right;">68482</div>
<div class="t d" style="left:579px;width:57px;top:154.74px;font-size:13.3px;line-height:13.3px;font-weight:normal;color:#000;text-align:right;">68482</div>
<div class="t d" style="left:637px;width:57px;top:154.74px;font-size:13.3px;line-height:13.3px;font-weight:normal;color:#000;text-align:right;">68482</div>
<div class="t d" style="left:695px;width:57px;top:154.74px;font-size:13.3px;line-height:13.3px;font-weight:normal;color:#000;text-align:right;">68482</div>
<div class="t d" style="left:753px;width:57px;top:154.74px;font-size:13.3px;line-height:13.3px;font-weight:normal;color:#000;text-align:right;">68482</div>
<div class="t d" style="left:811px;width:71px;top:154.74px;font-size:13.3px;line-height:13.3px;font-weight:normal;color:#000;text-align:right;">68482</div>
<div class="t d" style="left:883px;width:71px;top:154.74px;font-size:13.3px;line-height:13.3px;font-weight:normal;color:#000;text-align:right;">68482</div>
<div class="t d" style="left:57px;width:57px;top:174.74px;font-size:13.3px;line-height:13.3px;font-weight:normal;color:#000;text-align:right;">229227</div>
<div class="t d" style="left:115px;width:57px;top:174.74px;font-size:13.3px;line-height:13.3px;font-weight:normal;color:#000;text-align:right;">229227</div>
<div class="t d" style="left:173px;width:57px;top:174.74px;font-size:13.3px;line-height:13.3px;font-weight:normal;color:#000;text-align:right;">229227</div>
<div class="t d" style="left:231px;width:57px;top:174.74px;font-size:13.3px;line-height:13.3px;font-weight:normal;color:#000;text-align:right;">229227</div>
<div class="t d" style="left:289px;width:57px;top:174.74px;font-size:13.3px;line-height:13.3px;font-weight:normal;color:#000;text-align:right;">229227</div>
<div class="t d" style="left:347px;width:57px;top:174.74px;font-size:13.3px;line-height:13.3px;font-weight:normal;color:#000;text-align:right;">229227</div>
<div class="t d" style="left:405px;width:57px;top:174.74px;font-size:13.3px;line-height:13.3px;font-weight:normal;color:#000;text-align:right;">229227</div>
<div class="t d" style="left:463px;width:57px;top:174.74px;font-size:13.3px;line-height:13.3px;font-weight:normal;color:#000;text-align:right;">229227</div>
<div class="t d" style="left:521px;width:57px;top:174.74px;font-size:13.3px;line-height:13.3px;font-weight:normal;color:#000;text-align:right;">229227</div>
<div class="t d" style="left:579px;width:57px;top:174.74px;font-size:13.3px;line-height:13.3px;font-weight:normal;color:#000;text-align:right;">229227</div>
<div class="t d" style="left:637px;width:57px;top:174.74px;font-size:13.3px;line-height:13.3px;font-weight:normal;color:#000;text-align:right;">229227</div>
<div class="t d" style="left:695px;width:57px;top:174.74px;font-size:13.3px;line-height:13.3px;font-weight:normal;color:#000;text-align:right;">229227</div>
<div class="t d" style="left:753px;width:57px;top:174.74px;font-size:13.3px;line-height:13.3px;font-weight:normal;color:#000;text-align:right;">229227</div>
<div class="t d" style="left:811px;width:71px;top:174.74px;font-size:13.3px;line-height:13.3px;font-weight:normal;color:#000;text-align:right;">229227</div>
<div class="t d" style="left:883px;width:71px;top:174.74px;font-size:13.3px;line-height:13.3px;font-weight:normal;color:#000;text-align:right;">229227</div>
<div class="t d" style="left:955px;width:71px;top:174.74px;font-size:13.3px;line-height:13.3px;font-weight:normal;color:#000;text-align:right;">229227</div>
<div class="t d" style="left:57px;width:57px;top:194.74px;font-size:13.3px;line-height:13.3px;font-weight:normal;color:#000;text-align:right;">86863</div>
<div class="t d" style="left:115px;width:57px;top:194.74px;font-size:13.3px;line-height:13.3px;font-weight:normal;color:#000;text-align:right;">86863</div>
<div class="t d" style="left:173px;width:57px;top:194.74px;font-size:13.3px;line-height:13.3px;font-weight:normal;color:#000;text-align:right;">86863</div>
<div class="t d" style="left:231px;width:57px;top:194.74px;font-size:13.3px;line-height:13.3px;font-weight:normal;color:#000;text-align:right;">86863</div>
<div class="t d" style="left:289px;width:57px;top:194.74px;font-size:13.3px;line-height:13.3px;font-weight:normal;color:#000;text-align:right;">86863</div>
<div class="t d" style="left:347px;width:57px;top:194.74px;font-size:13.3px;line-height:13.3px;font-weight:normal;color:#000;text-align:right;">86863</div>
<div class="t d" style="left:405px;width:57px;top:194.74px;font-size:13.3px;line-height:13.3px;font-weight:normal;color:#000;text-align:right;">86863</div>
<div class="t d" style="left:463px;width:57px;top:194.74px;font-size:13.3px;line-height:13.3px;font-weight:normal;color:#000;text-align:right;">86863</div>
<div class="t d" style="left:521px;width:57px;top:194.74px;font-size:13.3px;line-height:13.3px;font-weight:normal;color:#000;text-align:right;">86863</div>
<div class="t d" style="left:579px;width:57px;top:194.74px;font-size:13.3px;line-height:13.3px;font-weight:normal;color:#000;text-align:right;">86863</div>
<div class="t d" style="left:637px;width:57px;top:194.74px;font-size:13.3px;line-height:13.3px;font-weight:normal;color:#000;text-align:right;">86863</div>
<div class="t d" style="left:695px;width:57px;top:194.74px;font-size:13.3px;line-height:13.3px;font-weight:normal;color:#000;text-align:right;">86863</div>
<div class="t d" style="left:753px;width:57px;top:194.74px;font-size:13.3px;line-height:13.3px;font-weight:normal;color:#000;text-align:right;">86863</div>
<div class="t d" style="left:811px;width:71px;top:194.74px;font-size:13.3px;line-height:13.3px;font-weight:normal;color:#000;text-align:right;">86863</div>
<div class="t d" style="left:883px;width:71px;top:194.74px;font-size:13.3px;line-height:13.3px;font-weight:normal;color:#000;text-align:right;">86863</div>
<div class="t d" style="left:57px;width:57px;top:214.74px;font-size:13.3px;line-height:13.3px;font-weight:normal;color:#000;text-align:right;">54410</div>
<div class="t d" style="left:115px;width:57px;top:214.74px;font-size:13.3px;line-height:13.3px;font-weight:normal;color:#000;text-align:right;">54410</div>
<div class="t d" style="left:173px;width:57px;top:214.74px;font-size:13.3px;line-height:13.3px;font-weight:normal;color:#000;text-align:right;">54410</div>
<div class="t d" style="left:231px;width:57px;top:214.74px;font-size:13.3px;line-height:13.3px;font-weight:normal;color:#000;text-align:right;">54410</div>
<div class="t d" style="left:289px;width:57px;top:214.74px;font-size:13.3px;line-height:13.3px;font-weight:normal;color:#000;text-align:right;">54410</div>
<div class="t d" style="left:347px;width:57px;top:214.74px;font-size:13.3px;line-height:13.3px;font-weight:normal;color:#000;text-align:right;">54410</div>
<div class="t d" style="left:405px;width:57px;top:214.74px;font-size:13.3px;line-height:13.3px;font-weight:normal;color:#000;text-align:right;">54410</div>
<div class="t d" style="left:463px;width:57px;top:214.74px;font-size:13.3px;line-height:13.3px;font-weight:normal;color:#000;text-align:right;">54410</div>
<div class="t d" style="left:521px;width:57px;top:214.74px;font-size:13.3px;line-height:13.3px;font-weight:normal;color:#000;text-align:right;">54410</div>
<div class="t d" style="left:579px;width:57px;top:214.74px;font-size:13.3px;line-height:13.3px;font-weight:normal;color:#000;text-align:right;">54410</div>
<div class="t d" style="left:637px;width:57px;top:214.74px;font-size:13.3px;line-height:13.3px;font-weight:normal;color:#000;text-align:right;">54410</div>
<div class="t d" style="left:695px;width:57px;top:214.74px;font-size:13.3px;line-height:13.3px;font-weight:normal;color:#000;text-align:right;">54410</div>
<div class="t d" style="left:753px;width:57px;top:214.74px;font-size:13.3px;line-height:13.3px;font-weight:normal;color:#000;text-align:right;">54410</div>
<div class="t d" style="left:811px;width:71px;top:214.74px;font-size:13.3px;line-height:13.3px;font-weight:normal;color:#000;text-align:right;">54410</div>
<div class="t d" style="left:883px;width:71px;top:214.74px;font-size:13.3px;line-height:13.3px;font-weight:normal;color:#000;text-align:right;">54410</div>
<div class="t d" style="left:57px;width:57px;top:234.74px;font-size:13.3px;line-height:13.3px;font-weight:normal;color:#000;text-align:right;">68510</div>
<div class="t d" style="left:115px;width:57px;top:234.74px;font-size:13.3px;line-height:13.3px;font-weight:normal;color:#000;text-align:right;">68510</div>
<div class="t d" style="left:173px;width:57px;top:234.74px;font-size:13.3px;line-height:13.3px;font-weight:normal;color:#000;text-align:right;">68510</div>
<div class="t d" style="left:231px;width:57px;top:234.74px;font-size:13.3px;line-height:13.3px;font-weight:normal;color:#000;text-align:right;">68510</div>
<div class="t d" style="left:289px;width:57px;top:234.74px;font-size:13.3px;line-height:13.3px;font-weight:normal;color:#000;text-align:right;">68510</div>
<div class="t d" style="left:347px;width:57px;top:234.74px;font-size:13.3px;line-height:13.3px;font-weight:normal;color:#000;text-align:right;">68510</div>
<div class="t d" style="left:405px;width:57px;top:234.74px;font-size:13.3px;line-height:13.3px;font-weight:normal;color:#000;text-align:right;">68510</div>
<div class="t d" style="left:463px;width:57px;top:234.74px;font-size:13.3px;line-height:13.3px;font-weight:normal;color:#000;text-align:right;">68510</div>
<div class="t d" style="left:521px;width:57px;top:234.74px;font-size:13.3px;line-height:13.3px;font-weight:normal;color:#000;text-align:right;">68510</div>
<div class="t d" style="left:579px;width:57px;top:234.74px;font-size:13.3px;line-height:13.3px;font-weight:normal;color:#000;text-align:right;">68510</div>
<div class="t d" style="left:637px;width:57px;top:234.74px;font-size:13.3px;line-height:13.3px;font-weight:normal;color:#000;text-align:right;">68510</div>
<div class="t d" style="left:695px;width:57px;top:234.74px;font-size:13.3px;line-height:13.3px;font-weight:normal;color:#000;text-align:right;">68510</div>
<div class="t d" style="left:753px;width:57px;top:234.74px;font-size:13.3px;line-height:13.3px;font-weight:normal;color:#000;text-align:right;">68510</div>
<div class="t d" style="left:811px;width:71px;top:234.74px;font-size:13.3px;line-height:13.3px;font-weight:normal;color:#000;text-align:right;">68510</div>
<div class="t d" style="left:883px;width:71px;top:234.74px;font-size:13.3px;line-height:13.3px;font-weight:normal;color:#000;text-align:right;">68510</div>
<div class="t d" style="left:5px;width:52px;top:254.74px;font-size:13.3px;line-height:13.3px;font-weight:normal;color:#000;text-align:center;">01-03</div>
<div class="t d" style="left:57px;width:57px;top:254.74px;font-size:13.3px;line-height:13.3px;font-weight:normal;color:#000;text-align:right;">0</div>
<div class="t d" style="left:115px;width:57px;top:254.74px;font-size:13.3px;line-height:13.3px;font-weight:normal;color:#000;text-align:right;">0</div>
<div class="t d" style="left:173px;width:57px;top:254.74px;font-size:13.3px;line-height:13.3px;font-weight:normal;color:#000;text-align:right;">0</div>
<div class="t d" style="left:231px;width:57px;top:254.74px;font-size:13.3px;line-height:13.3px;font-weight:normal;color:#000;text-align:right;">0</div>
<div class="t d" style="left:289px;width:57px;top:254.74px;font-size:13.3px;line-height:13.3px;font-weight:normal;color:#000;text-align:right;">0</div>
<div class="t d" style="left:347px;width:57px;top:254.74px;font-size:13.3px;line-height:13.3px;font-weight:normal;color:#000;text-align:right;">0</div>
<div class="t d" style="left:405px;width:57px;top:254.74px;font-size:13.3px;line-height:13.3px;font-weight:normal;color:#000;text-align:right;">0</div>
<div class="t d" style="left:463px;width:57px;top:254.74px;font-size:13.3px;line-height:13.3px;font-weight:normal;color:#000;text-align:right;">0</div>
<div class="t d" style="left:521px;width:57px;top:254.74px;font-size:13.3px;line-height:13.3px;font-weight:normal;color:#000;text-align:right;">0</div>
<div class="t d" style="left:579px;width:57px;top:254.74px;font-size:13.3px;line-height:13.3px;font-weight:normal;color:#000;text-align:right;">0</div>
<div class="t d" style="left:637px;width:57px;top:254.74px;font-size:13.3px;line-height:13.3px;font-weight:normal;color:#000;text-align:right;">0</div>
<div class="t d" style="left:695px;width:57px;top:254.74px;font-size:13.3px;line-height:13.3px;font-weight:normal;color:#000;text-align:right;">0</div>
<div class="t d" style="left:753px;width:57px;top:254.74px;font-size:13.3px;line-height:13.3px;font-weight:normal;color:#000;text-align:right;">0</div>
<div class="t d" style="left:811px;width:71px;top:254.74px;font-size:13.3px;line-height:13.3px;font-weight:normal;color:#000;text-align:right;">0</div>
<div class="t d" style="left:883px;width:71px;top:254.74px;font-size:13.3px;line-height:13.3px;font-weight:normal;color:#000;text-align:right;">0</div>
<div class="t d" style="left:5px;width:52px;top:274.74px;font-size:13.3px;line-height:13.3px;font-weight:normal;color:#000;text-align:center;">01-03</div>
<div class="t d" style="left:57px;width:57px;top:274.74px;font-size:13.3px;line-height:13.3px;font-weight:normal;color:#000;text-align:right;">0</div>
<div class="t d" style="left:115px;width:57px;top:274.74px;font-size:13.3px;line-height:13.3px;font-weight:normal;color:#000;text-align:right;">0</div>
<div class="t d" style="left:173px;width:57px;top:274.74px;font-size:13.3px;line-height:13.3px;font-weight:normal;color:#000;text-align:right;">0</div>
<div class="t d" style="left:231px;width:57px;top:274.74px;font-size:13.3px;line-height:13.3px;font-weight:normal;color:#000;text-align:right;">0</div>
<div class="t d" style="left:289px;width:57px;top:274.74px;font-size:13.3px;line-height:13.3px;font-weight:normal;color:#000;text-align:right;">0</div>
<div class="t d" style="left:347px;width:57px;top:274.74px;font-size:13.3px;line-height:13.3px;font-weight:normal;color:#000;text-align:right;">0</div>
<div class="t d" style="left:405px;width:57px;top:274.74px;font-size:13.3px;line-height:13.3px;font-weight:normal;color:#000;text-align:right;">0</div>
<div class="t d" style="left:463px;width:57px;top:274.74px;font-size:13.3px;line-height:13.3px;font-weight:normal;color:#000;text-align:right;">0</div>
<div class="t d" style="left:521px;width:57px;top:274.74px;font-size:13.3px;line-height:13.3px;font-weight:normal;color:#000;text-align:right;">0</div>
<div class="t d" style="left:579px;width:57px;top:274.74px;font-size:13.3px;line-height:13.3px;font-weight:normal;color:#000;text-align:right;">0</div>
<div class="t d" style="left:637px;width:57px;top:274.74px;font-size:13.3px;line-height:13.3px;font-weight:normal;color:#000;text-align:right;">0</div>
<div class="t d" style="left:695px;width:57px;top:274.74px;font-size:13.3px;line-height:13.3px;font-weight:normal;color:#000;text-align:right;">0</div>
<div class="t d" style="left:753px;width:57px;top:274.74px;font-size:13.3px;line-height:13.3px;font-weight:normal;color:#000;text-align:right;">0</div>
<div class="t d" style="left:811px;width:71px;top:274.74px;font-size:13.3px;line-height:13.3px;font-weight:normal;color:#000;text-align:right;">0</div>
<div class="t d" style="left:883px;width:71px;top:274.74px;font-size:13.3px;line-height:13.3px;font-weight:normal;color:#000;text-align:right;">0</div>
<div class="t d" style="left:5px;width:52px;top:294.74px;font-size:13.3px;line-height:13.3px;font-weight:normal;color:#000;text-align:center;">01-03</div>
<div class="t d" style="left:57px;width:57px;top:294.74px;font-size:13.3px;line-height:13.3px;font-weight:normal;color:#000;text-align:right;">0</div>
<div class="t d" style="left:115px;width:57px;top:294.74px;font-size:13.3px;line-height:13.3px;font-weight:normal;color:#000;text-align:right;">0</div>
<div class="t d" style="left:173px;width:57px;top:294.74px;font-size:13.3px;line-height:13.3px;font-weight:normal;color:#000;text-align:right;">0</div>
<div class="t d" style="left:231px;width:57px;top:294.74px;font-size:13.3px;line-height:13.3px;font-weight:normal;color:#000;text-align:right;">0</div>
<div class="t d" style="left:289px;width:57px;top:294.74px;font-size:13.3px;line-height:13.3px;font-weight:normal;color:#000;text-align:right;">0</div>
<div class="t d" style="left:347px;width:57px;top:294.74px;font-size:13.3px;line-height:13.3px;font-weight:normal;color:#000;text-align:right;">0</div>
<div class="t d" style="left:405px;width:57px;top:294.74px;font-size:13.3px;line-height:13.3px;font-weight:normal;color:#000;text-align:right;">0</div>
<div class="t d" style="left:463px;width:57px;top:294.74px;font-size:13.3px;line-height:13.3px;font-weight:normal;color:#000;text-align:right;">0</div>
<div class="t d" style="left:521px;width:57px;top:294.74px;font-size:13.3px;line-height:13.3px;font-weight:normal;color:#000;text-align:right;">0</div>
<div class="t d" style="left:579px;width:57px;top:294.74px;font-size:13.3px;line-height:13.3px;font-weight:normal;color:#000;text-align:right;">0</div>
<div class="t d" style="left:637px;width:57px;top:294.74px;font-size:13.3px;line-height:13.3px;font-weight:normal;color:#000;text-align:right;">0</div>
<div class="t d" style="left:695px;width:57px;top:294.74px;font-size:13.3px;line-height:13.3px;font-weight:normal;color:#000;text-align:right;">0</div>
<div class="t d" style="left:753px;width:57px;top:294.74px;font-size:13.3px;line-height:13.3px;font-weight:normal;color:#000;text-align:right;">0</div>
<div class="t d" style="left:811px;width:71px;top:294.74px;font-size:13.3px;line-height:13.3px;font-weight:normal;color:#000;text-align:right;">0</div>
<div class="t d" style="left:883px;width:71px;top:294.74px;font-size:13.3px;line-height:13.3px;font-weight:normal;color:#000;text-align:right;">0</div>
<div class="t d" style="left:5px;width:52px;top:314.74px;font-size:13.3px;line-height:13.3px;font-weight:normal;color:#000;text-align:center;">01-03</div>
<div class="t d" style="left:57px;width:57px;top:314.74px;font-size:13.3px;line-height:13.3px;font-weight:normal;color:#000;text-align:right;">0</div>
<div class="t d" style="left:115px;width:57px;top:314.74px;font-size:13.3px;line-height:13.3px;font-weight:normal;color:#000;text-align:right;">0</div>
<div class="t d" style="left:173px;width:57px;top:314.74px;font-size:13.3px;line-height:13.3px;font-weight:normal;color:#000;text-align:right;">0</div>
<div class="t d" style="left:231px;width:57px;top:314.74px;font-size:13.3px;line-height:13.3px;font-weight:normal;color:#000;text-align:right;">0</div>
<div class="t d" style="left:289px;width:57px;top:314.74px;font-size:13.3px;line-height:13.3px;font-weight:normal;color:#000;text-align:right;">0</div>
<div class="t d" style="left:347px;width:57px;top:314.74px;font-size:13.3px;line-height:13.3px;font-weight:normal;color:#000;text-align:right;">0</div>
<div class="t d" style="left:405px;width:57px;top:314.74px;font-size:13.3px;line-height:13.3px;font-weight:normal;color:#000;text-align:right;">0</div>
<div class="t d" style="left:463px;width:57px;top:314.74px;font-size:13.3px;line-height:13.3px;font-weight:normal;color:#000;text-align:right;">0</div>
<div class="t d" style="left:521px;width:57px;top:314.74px;font-size:13.3px;line-height:13.3px;font-weight:normal;color:#000;text-align:right;">0</div>
<div class="t d" style="left:579px;width:57px;top:314.74px;font-size:13.3px;line-height:13.3px;font-weight:normal;color:#000;text-align:right;">0</div>
<div class="t d" style="left:637px;width:57px;top:314.74px;font-size:13.3px;line-height:13.3px;font-weight:normal;color:#000;text-align:right;">0</div>
<div class="t d" style="left:695px;width:57px;top:314.74px;font-size:13.3px;line-height:13.3px;font-weight:normal;color:#000;text-align:right;">0</div>
<div class="t d" style="left:753px;width:57px;top:314.74px;font-size:13.3px;line-height:13.3px;font-weight:normal;color:#000;text-align:right;">0</div>
<div class="t d" style="left:811px;width:71px;top:314.74px;font-size:13.3px;line-height:13.3px;font-weight:normal;color:#000;text-align:right;">0</div>
<div class="t d" style="left:883px;width:71px;top:314.74px;font-size:13.3px;line-height:13.3px;font-weight:normal;color:#000;text-align:right;">0</div>
<div class="t d" style="left:0px;width:300px;top:333.74px;font-size:13.3px;line-height:13.3px;font-weight:normal;color:#000;text-align:left;transform-origin:0 0;transform:scaleX(0.9);">VCU61664</div>
<div class="t d" style="left:57px;width:57px;top:333.74px;font-size:13.3px;line-height:13.3px;font-weight:normal;color:#000;text-align:right;">41</div>
<div class="t d" style="left:115px;width:57px;top:333.74px;font-size:13.3px;line-height:13.3px;font-weight:normal;color:#000;text-align:right;">41</div>
<div class="t d" style="left:173px;width:57px;top:333.74px;font-size:13.3px;line-height:13.3px;font-weight:normal;color:#000;text-align:right;">41</div>
<div class="t d" style="left:231px;width:57px;top:333.74px;font-size:13.3px;line-height:13.3px;font-weight:normal;color:#000;text-align:right;">41</div>
<div class="t d" style="left:289px;width:57px;top:333.74px;font-size:13.3px;line-height:13.3px;font-weight:normal;color:#000;text-align:right;">41</div>
<div class="t d" style="left:347px;width:57px;top:333.74px;font-size:13.3px;line-height:13.3px;font-weight:normal;color:#000;text-align:right;">41</div>
<div class="t d" style="left:405px;width:57px;top:333.74px;font-size:13.3px;line-height:13.3px;font-weight:normal;color:#000;text-align:right;">41</div>
<div class="t d" style="left:463px;width:57px;top:333.74px;font-size:13.3px;line-height:13.3px;font-weight:normal;color:#000;text-align:right;">41</div>
<div class="t d" style="left:521px;width:57px;top:333.74px;font-size:13.3px;line-height:13.3px;font-weight:normal;color:#000;text-align:right;">41</div>
<div class="t d" style="left:579px;width:57px;top:333.74px;font-size:13.3px;line-height:13.3px;font-weight:normal;color:#000;text-align:right;">41</div>
<div class="t d" style="left:637px;width:57px;top:333.74px;font-size:13.3px;line-height:13.3px;font-weight:normal;color:#000;text-align:right;">41</div>
<div class="t d" style="left:695px;width:57px;top:333.74px;font-size:13.3px;line-height:13.3px;font-weight:normal;color:#000;text-align:right;">41</div>
<div class="t d" style="left:753px;width:57px;top:333.74px;font-size:13.3px;line-height:13.3px;font-weight:normal;color:#000;text-align:right;">41</div>
<div class="t d" style="left:811px;width:71px;top:333.74px;font-size:13.3px;line-height:13.3px;font-weight:normal;color:#000;text-align:right;">41</div>
<div class="t d" style="left:883px;width:71px;top:333.74px;font-size:13.3px;line-height:13.3px;font-weight:normal;color:#000;text-align:right;">41</div>
<div class="t d" style="left:57px;width:57px;top:353.74px;font-size:13.3px;line-height:13.3px;font-weight:normal;color:#000;text-align:right;">73544</div>
<div class="t d" style="left:115px;width:57px;top:353.74px;font-size:13.3px;line-height:13.3px;font-weight:normal;color:#000;text-align:right;">73544</div>
<div class="t d" style="left:173px;width:57px;top:353.74px;font-size:13.3px;line-height:13.3px;font-weight:normal;color:#000;text-align:right;">73544</div>
<div class="t d" style="left:231px;width:57px;top:353.74px;font-size:13.3px;line-height:13.3px;font-weight:normal;color:#000;text-align:right;">73544</div>
<div class="t d" style="left:289px;width:57px;top:353.74px;font-size:13.3px;line-height:13.3px;font-weight:normal;color:#000;text-align:right;">73544</div>
<div class="t d" style="left:347px;width:57px;top:353.74px;font-size:13.3px;line-height:13.3px;font-weight:normal;color:#000;text-align:right;">73544</div>
<div class="t d" style="left:405px;width:57px;top:353.74px;font-size:13.3px;line-height:13.3px;font-weight:normal;color:#000;text-align:right;">73544</div>
<div class="t d" style="left:463px;width:57px;top:353.74px;font-size:13.3px;line-height:13.3px;font-weight:normal;color:#000;text-align:right;">73544</div>
<div class="t d" style="left:521px;width:57px;top:353.74px;font-size:13.3px;line-height:13.3px;font-weight:normal;color:#000;text-align:right;">73544</div>
<div class="t d" style="left:579px;width:57px;top:353.74px;font-size:13.3px;line-height:13.3px;font-weight:normal;color:#000;text-align:right;">73544</div>
<div class="t d" style="left:637px;width:57px;top:353.74px;font-size:13.3px;line-height:13.3px;font-weight:normal;color:#000;text-align:right;">73544</div>
<div class="t d" style="left:695px;width:57px;top:353.74px;font-size:13.3px;line-height:13.3px;font-weight:normal;color:#000;text-align:right;">73544</div>
<div class="t d" style="left:753px;width:57px;top:353.74px;font-size:13.3px;line-height:13.3px;font-weight:normal;color:#000;text-align:right;">73544</div>
<div class="t d" style="left:811px;width:71px;top:353.74px;font-size:13.3px;line-height:13.3px;font-weight:normal;color:#000;text-align:right;">73544</div>
<div class="t d" style="left:883px;width:71px;top:353.74px;font-size:13.3px;line-height:13.3px;font-weight:normal;color:#000;text-align:right;">73544</div>
<div class="t d" style="left:57px;width:57px;top:373.74px;font-size:13.3px;line-height:13.3px;font-weight:normal;color:#000;text-align:right;">83865</div>
<div class="t d" style="left:115px;width:57px;top:373.74px;font-size:13.3px;line-height:13.3px;font-weight:normal;color:#000;text-align:right;">83865</div>
<div class="t d" style="left:173px;width:57px;top:373.74px;font-size:13.3px;line-height:13.3px;font-weight:normal;color:#000;text-align:right;">83865</div>
<div class="t d" style="left:231px;width:57px;top:373.74px;font-size:13.3px;line-height:13.3px;font-weight:normal;color:#000;text-align:right;">83865</div>
<div class="t d" style="left:289px;width:57px;top:373.74px;font-size:13.3px;line-height:13.3px;font-weight:normal;color:#000;text-align:right;">83865</div>
<div class="t d" style="left:347px;width:57px;top:373.74px;font-size:13.3px;line-height:13.3px;font-weight:normal;color:#000;text-align:right;">83865</div>
<div class="t d" style="left:405px;width:57px;top:373.74px;font-size:13.3px;line-height:13.3px;font-weight:normal;color:#000;text-align:right;">83865</div>
<div class="t d" style="left:463px;width:57px;top:373.74px;font-size:13.3px;line-height:13.3px;font-weight:normal;color:#000;text-align:right;">83865</div>
<div class="t d" style="left:521px;width:57px;top:373.74px;font-size:13.3px;line-height:13.3px;font-weight:normal;color:#000;text-align:right;">83865</div>
<div class="t d" style="left:579px;width:57px;top:373.74px;font-size:13.3px;line-height:13.3px;font-weight:normal;color:#000;text-align:right;">83865</div>
<div class="t d" style="left:637px;width:57px;top:373.74px;font-size:13.3px;line-height:13.3px;font-weight:normal;color:#000;text-align:right;">83865</div>
<div class="t d" style="left:695px;width:57px;top:373.74px;font-size:13.3px;line-height:13.3px;font-weight:normal;color:#000;text-align:right;">83865</div>
<div class="t d" style="left:753px;width:57px;top:373.74px;font-size:13.3px;line-height:13.3px;font-weight:normal;color:#000;text-align:right;">83865</div>
<div class="t d" style="left:811px;width:71px;top:373.74px;font-size:13.3px;line-height:13.3px;font-weight:normal;color:#000;text-align:right;">83865</div>
<div class="t d" style="left:883px;width:71px;top:373.74px;font-size:13.3px;line-height:13.3px;font-weight:normal;color:#000;text-align:right;">83865</div>
<div class="t d" style="left:57px;width:57px;top:393.74px;font-size:13.3px;line-height:13.3px;font-weight:normal;color:#000;text-align:right;">99634</div>
<div class="t d" style="left:115px;width:57px;top:393.74px;font-size:13.3px;line-height:13.3px;font-weight:normal;color:#000;text-align:right;">99634</div>
<div class="t d" style="left:173px;width:57px;top:393.74px;font-size:13.3px;line-height:13.3px;font-weight:normal;color:#000;text-align:right;">99634</div>
<div class="t d" style="left:231px;width:57px;top:393.74px;font-size:13.3px;line-height:13.3px;font-weight:normal;color:#000;text-align:right;">99634</div>
<div class="t d" style="left:289px;width:57px;top:393.74px;font-size:13.3px;line-height:13.3px;font-weight:normal;color:#000;text-align:right;">99634</div>
<div class="t d" style="left:347px;width:57px;top:393.74px;font-size:13.3px;line-height:13.3px;font-weight:normal;color:#000;text-align:right;">99634</div>
<div class="t d" style="left:405px;width:57px;top:393.74px;font-size:13.3px;line-height:13.3px;font-weight:normal;color:#000;text-align:right;">99634</div>
<div class="t d" style="left:463px;width:57px;top:393.74px;font-size:13.3px;line-height:13.3px;font-weight:normal;color:#000;text-align:right;">99634</div>
<div class="t d" style="left:521px;width:57px;top:393.74px;font-size:13.3px;line-height:13.3px;font-weight:normal;color:#000;text-align:right;">99634</div>
<div class="t d" style="left:579px;width:57px;top:393.74px;font-size:13.3px;line-height:13.3px;font-weight:normal;color:#000;text-align:right;">99634</div>
<div class="t d" style="left:637px;width:57px;top:393.74px;font-size:13.3px;line-height:13.3px;font-weight:normal;color:#000;text-align:right;">99634</div>
<div class="t d" style="left:695px;width:57px;top:393.74px;font-size:13.3px;line-height:13.3px;font-weight:normal;color:#000;text-align:right;">99634</div>
<div class="t d" style="left:753px;width:57px;top:393.74px;font-size:13.3px;line-height:13.3px;font-weight:normal;color:#000;text-align:right;">99634</div>
<div class="t d" style="left:811px;width:71px;top:393.74px;font-size:13.3px;line-height:13.3px;font-weight:normal;color:#000;text-align:right;">99634</div>
<div class="t d" style="left:883px;width:71px;top:393.74px;font-size:13.3px;line-height:13.3px;font-weight:normal;color:#000;text-align:right;">99634</div>
<div class="t d" style="left:57px;width:57px;top:413.74px;font-size:13.3px;line-height:13.3px;font-weight:normal;color:#000;text-align:right;">94879</div>
<div class="t d" style="left:115px;width:57px;top:413.74px;font-size:13.3px;line-height:13.3px;font-weight:normal;color:#000;text-align:right;">94879</div>
<div class="t d" style="left:173px;width:57px;top:413.74px;font-size:13.3px;line-height:13.3px;font-weight:normal;color:#000;text-align:right;">94879</div>
<div class="t d" style="left:231px;width:57px;top:413.74px;font-size:13.3px;line-height:13.3px;font-weight:normal;color:#000;text-align:right;">94879</div>
<div class="t d" style="left:289px;width:57px;top:413.74px;font-size:13.3px;line-height:13.3px;font-weight:normal;color:#000;text-align:right;">94879</div>
<div class="t d" style="left:347px;width:57px;top:413.74px;font-size:13.3px;line-height:13.3px;font-weight:normal;color:#000;text-align:right;">94879</div>
<div class="t d" style="left:405px;width:57px;top:413.74px;font-size:13.3px;line-height:13.3px;font-weight:normal;color:#000;text-align:right;">94879</div>
<div class="t d" style="left:463px;width:57px;top:413.74px;font-size:13.3px;line-height:13.3px;font-weight:normal;color:#000;text-align:right;">94879</div>
<div class="t d" style="left:521px;width:57px;top:413.74px;font-size:13.3px;line-height:13.3px;font-weight:normal;color:#000;text-align:right;">94879</div>
<div class="t d" style="left:579px;width:57px;top:413.74px;font-size:13.3px;line-height:13.3px;font-weight:normal;color:#000;text-align:right;">94879</div>
<div class="t d" style="left:637px;width:57px;top:413.74px;font-size:13.3px;line-height:13.3px;font-weight:normal;color:#000;text-align:right;">94879</div>
<div class="t d" style="left:695px;width:57px;top:413.74px;font-size:13.3px;line-height:13.3px;font-weight:normal;color:#000;text-align:right;">94879</div>
<div class="t d" style="left:753px;width:57px;top:413.74px;font-size:13.3px;line-height:13.3px;font-weight:normal;color:#000;text-align:right;">94879</div>
<div class="t d" style="left:811px;width:71px;top:413.74px;font-size:13.3px;line-height:13.3px;font-weight:normal;color:#000;text-align:right;">94879</div>
<div class="t d" style="left:883px;width:71px;top:413.74px;font-size:13.3px;line-height:13.3px;font-weight:normal;color:#000;text-align:right;">94879</div>
<div class="t d" style="left:5px;width:52px;top:433.74px;font-size:13.3px;line-height:13.3px;font-weight:normal;color:#000;text-align:center;">01-07</div>
<div class="t d" style="left:57px;width:57px;top:433.74px;font-size:13.3px;line-height:13.3px;font-weight:normal;color:#000;text-align:right;">0</div>
<div class="t d" style="left:115px;width:57px;top:433.74px;font-size:13.3px;line-height:13.3px;font-weight:normal;color:#000;text-align:right;">0</div>
<div class="t d" style="left:173px;width:57px;top:433.74px;font-size:13.3px;line-height:13.3px;font-weight:normal;color:#000;text-align:right;">0</div>
<div class="t d" style="left:231px;width:57px;top:433.74px;font-size:13.3px;line-height:13.3px;font-weight:normal;color:#000;text-align:right;">0</div>
<div class="t d" style="left:289px;width:57px;top:433.74px;font-size:13.3px;line-height:13.3px;font-weight:normal;color:#000;text-align:right;">0</div>
<div class="t d" style="left:347px;width:57px;top:433.74px;font-size:13.3px;line-height:13.3px;font-weight:normal;color:#000;text-align:right;">0</div>
<div class="t d" style="left:405px;width:57px;top:433.74px;font-size:13.3px;line-height:13.3px;font-weight:normal;color:#000;text-align:right;">0</div>
<div class="t d" style="left:463px;width:57px;top:433.74px;font-size:13.3px;line-height:13.3px;font-weight:normal;color:#000;text-align:right;">0</div>
<div class="t d" style="left:521px;width:57px;top:433.74px;font-size:13.3px;line-height:13.3px;font-weight:normal;color:#000;text-align:right;">0</div>
<div class="t d" style="left:579px;width:57px;top:433.74px;font-size:13.3px;line-height:13.3px;font-weight:normal;color:#000;text-align:right;">0</div>
<div class="t d" style="left:637px;width:57px;top:433.74px;font-size:13.3px;line-height:13.3px;font-weight:normal;color:#000;text-align:right;">0</div>
<div class="t d" style="left:695px;width:57px;top:433.74px;font-size:13.3px;line-height:13.3px;font-weight:normal;color:#000;text-align:right;">0</div>
<div class="t d" style="left:753px;width:57px;top:433.74px;font-size:13.3px;line-height:13.3px;font-weight:normal;color:#000;text-align:right;">0</div>
<div class="t d" style="left:811px;width:71px;top:433.74px;font-size:13.3px;line-height:13.3px;font-weight:normal;color:#000;text-align:right;">0</div>
<div class="t d" style="left:883px;width:71px;top:433.74px;font-size:13.3px;line-height:13.3px;font-weight:normal;color:#000;text-align:right;">0</div>
<div class="t d" style="left:5px;width:52px;top:453.74px;font-size:13.3px;line-height:13.3px;font-weight:normal;color:#000;text-align:center;">01-07</div>
<div class="t d" style="left:57px;width:57px;top:453.74px;font-size:13.3px;line-height:13.3px;font-weight:normal;color:#000;text-align:right;">0</div>
<div class="t d" style="left:115px;width:57px;top:453.74px;font-size:13.3px;line-height:13.3px;font-weight:normal;color:#000;text-align:right;">0</div>
<div class="t d" style="left:173px;width:57px;top:453.74px;font-size:13.3px;line-height:13.3px;font-weight:normal;color:#000;text-align:right;">0</div>
<div class="t d" style="left:231px;width:57px;top:453.74px;font-size:13.3px;line-height:13.3px;font-weight:normal;color:#000;text-align:right;">0</div>
<div class="t d" style="left:289px;width:57px;top:453.74px;font-size:13.3px;line-height:13.3px;font-weight:normal;color:#000;text-align:right;">0</div>
<div class="t d" style="left:347px;width:57px;top:453.74px;font-size:13.3px;line-height:13.3px;font-weight:normal;color:#000;text-align:right;">0</div>
<div class="t d" style="left:405px;width:57px;top:453.74px;font-size:13.3px;line-height:13.3px;font-weight:normal;color:#000;text-align:right;">0</div>
<div class="t d" style="left:463px;width:57px;top:453.74px;font-size:13.3px;line-height:13.3px;font-weight:normal;color:#000;text-align:right;">0</div>
<div class="t d" style="left:521px;width:57px;top:453.74px;font-size:13.3px;line-height:13.3px;font-weight:normal;color:#000;text-align:right;">0</div>
<div class="t d" style="left:579px;width:57px;top:453.74px;font-size:13.3px;line-height:13.3px;font-weight:normal;color:#000;text-align:right;">0</div>
<div class="t d" style="left:637px;width:57px;top:453.74px;font-size:13.3px;line-height:13.3px;font-weight:normal;color:#000;text-align:right;">0</div>
<div class="t d" style="left:695px;width:57px;top:453.74px;font-size:13.3px;line-height:13.3px;font-weight:normal;color:#000;text-align:right;">0</div>
<div class="t d" style="left:753px;width:57px;top:453.74px;font-size:13.3px;line-height:13.3px;font-weight:normal;color:#000;text-align:right;">0</div>
<div class="t d" style="left:811px;width:71px;top:453.74px;font-size:13.3px;line-height:13.3px;font-weight:normal;color:#000;text-align:right;">0</div>
<div class="t d" style="left:883px;width:71px;top:453.74px;font-size:13.3px;line-height:13.3px;font-weight:normal;color:#000;text-align:right;">0</div>
<div class="t sb" style="left:58px;width:57px;top:50.49px;font-size:13.6px;line-height:13.6px;font-weight:bold;color:#000;text-align:center;">12-19</div>
<div class="t sb" style="left:116px;width:57px;top:50.49px;font-size:13.6px;line-height:13.6px;font-weight:bold;color:#000;text-align:center;">12-20</div>
<div class="t sb" style="left:174px;width:57px;top:50.49px;font-size:13.6px;line-height:13.6px;font-weight:bold;color:#000;text-align:center;">12-21</div>
<div class="t sb" style="left:232px;width:57px;top:50.49px;font-size:13.6px;line-height:13.6px;font-weight:bold;color:#000;text-align:center;">12-22</div>
<div class="t sb" style="left:290px;width:57px;top:50.49px;font-size:13.6px;line-height:13.6px;font-weight:bold;color:#000;text-align:center;">12-23</div>
<div class="t sb" style="left:348px;width:57px;top:50.49px;font-size:13.6px;line-height:13.6px;font-weight:bold;color:#000;text-align:center;">12-24</div>
<div class="t sb" style="left:406px;width:57px;top:50.49px;font-size:13.6px;line-height:13.6px;font-weight:bold;color:#000;text-align:center;">12-25</div>
<div class="t sb" style="left:464px;width:57px;top:50.49px;font-size:13.6px;line-height:13.6px;font-weight:bold;color:#000;text-align:center;">12-26</div>
<div class="t sb" style="left:522px;width:57px;top:50.49px;font-size:13.6px;line-height:13.6px;font-weight:bold;color:#000;text-align:center;">12-27</div>
<div class="t sb" style="left:580px;width:57px;top:50.49px;font-size:13.6px;line-height:13.6px;font-weight:bold;color:#000;text-align:center;">12-28</div>
<div class="t sb" style="left:638px;width:57px;top:50.49px;font-size:13.6px;line-height:13.6px;font-weight:bold;color:#000;text-align:center;">12-29</div>
<div class="t sb" style="left:696px;width:57px;top:50.49px;font-size:13.6px;line-height:13.6px;font-weight:bold;color:#000;text-align:center;">12-30</div>
<div class="t sb" style="left:754px;width:57px;top:50.49px;font-size:13.6px;line-height:13.6px;font-weight:bold;color:#000;text-align:center;">12-31</div>
<div class="t sb" style="left:812px;width:71px;top:50.49px;font-size:13.6px;line-height:13.6px;font-weight:bold;color:#000;text-align:center;">1-1</div>
<div class="t sb" style="left:884px;width:71px;top:50.49px;font-size:13.6px;line-height:13.6px;font-weight:bold;color:#000;text-align:center;">1-2</div>
<div class="t sb" style="left:956px;width:71px;top:50.49px;font-size:13.6px;line-height:13.6px;font-weight:bold;color:#000;text-align:center;">1-3</div>
<div class="t sb" style="left:58px;width:57px;top:71.49px;font-size:13.6px;line-height:13.6px;font-weight:bold;color:#000;text-align:center;">Sun</div>
<div class="t sb" style="left:116px;width:57px;top:71.49px;font-size:13.6px;line-height:13.6px;font-weight:bold;color:#000;text-align:center;">Mon</div>
<div class="t sb" style="left:174px;width:57px;top:71.49px;font-size:13.6px;line-height:13.6px;font-weight:bold;color:#000;text-align:center;">Tue</div>
<div class="t sb" style="left:232px;width:57px;top:71.49px;font-size:13.6px;line-height:13.6px;font-weight:bold;color:#000;text-align:center;">Wed</div>
<div class="t sb" style="left:290px;width:57px;top:71.49px;font-size:13.6px;line-height:13.6px;font-weight:bold;color:#000;text-align:center;">Thu</div>
<div class="t sb" style="left:348px;width:57px;top:71.49px;font-size:13.6px;line-height:13.6px;font-weight:bold;color:#000;text-align:center;">Fri</div>
<div class="t sb" style="left:406px;width:57px;top:71.49px;font-size:13.6px;line-height:13.6px;font-weight:bold;color:#000;text-align:center;">Sat</div>
<div class="t sb" style="left:464px;width:57px;top:71.49px;font-size:13.6px;line-height:13.6px;font-weight:bold;color:#000;text-align:center;">Sun</div>
<div class="t sb" style="left:522px;width:57px;top:71.49px;font-size:13.6px;line-height:13.6px;font-weight:bold;color:#000;text-align:center;">Mon</div>
<div class="t sb" style="left:580px;width:57px;top:71.49px;font-size:13.6px;line-height:13.6px;font-weight:bold;color:#000;text-align:center;">Tue</div>
<div class="t sb" style="left:638px;width:57px;top:71.49px;font-size:13.6px;line-height:13.6px;font-weight:bold;color:#000;text-align:center;">Wed</div>
<div class="t sb" style="left:696px;width:57px;top:71.49px;font-size:13.6px;line-height:13.6px;font-weight:bold;color:#000;text-align:center;">Thu</div>
<div class="t sb" style="left:754px;width:57px;top:71.49px;font-size:13.6px;line-height:13.6px;font-weight:bold;color:#000;text-align:center;">Fri</div>
<div class="t sb" style="left:812px;width:71px;top:71.49px;font-size:13.6px;line-height:13.6px;font-weight:bold;color:#000;text-align:center;">Sat</div>
<div class="t sb" style="left:884px;width:71px;top:71.49px;font-size:13.6px;line-height:13.6px;font-weight:bold;color:#000;text-align:center;">Sun</div>
<div class="t sb" style="left:956px;width:71px;top:71.49px;font-size:13.6px;line-height:13.6px;font-weight:bold;color:#000;text-align:center;">Mon</div>
<svg class="r" style="left:0;top:66px" width="45" height="22" viewBox="0 66 45 22"><g stroke="#000" stroke-width="1.5" fill="none" stroke-linecap="butt"><path d="M5 70.8H15.5M10.2 70.8V76.5M6 73H9M11.5 73H14.5M6 75.2H9M11.5 75.2H14.5M5 78H15.5M6.2 80.3H15M6.8 80.3V85M9.2 80.3V85M11.8 80.3V82.5M14.5 80.3V82.5"/><path d="M16.8 72.6H30.5M23.5 70V80.6L21.8 79.6M18.3 74.4L20.6 76.6M17.2 80.2L23 76.2M28.8 70.6L27 72.2M24 75.2L30.6 80.2"/><path d="M33.7 70.5V80.2M33 70.8H40M33.7 75.2H40M33.7 79.6H40" stroke-width="1.7"/></g></svg>
<div class="btn" style="left:-12px;top:72px;"><svg width="14" height="13" style="position:absolute;left:0;top:0"><polygon points="2.8,4 10.2,4 6.5,8.2" fill="#6b6b6b"/></svg></div>
<div class="btn" style="left:41px;top:72px;"><svg width="14" height="13" style="position:absolute;left:0;top:0"><polygon points="2.8,4 10.2,4 6.5,8.2" fill="#6b6b6b"/></svg></div>
<div class="btn" style="left:99px;top:72px;"><svg width="14" height="13" style="position:absolute;left:0;top:0"><polygon points="2.8,4 10.2,4 6.5,8.2" fill="#6b6b6b"/></svg></div>
<div class="btn" style="left:157px;top:72px;"><svg width="14" height="13" style="position:absolute;left:0;top:0"><polygon points="2.8,4 10.2,4 6.5,8.2" fill="#6b6b6b"/></svg></div>
<div class="btn" style="left:215px;top:72px;"><svg width="14" height="13" style="position:absolute;left:0;top:0"><polygon points="2.8,4 10.2,4 6.5,8.2" fill="#6b6b6b"/></svg></div>
<div class="btn" style="left:273px;top:72px;"><svg width="14" height="13" style="position:absolute;left:0;top:0"><polygon points="2.8,4 10.2,4 6.5,8.2" fill="#6b6b6b"/></svg></div>
<div class="btn" style="left:331px;top:72px;"><svg width="14" height="13" style="position:absolute;left:0;top:0"><polygon points="2.8,4 10.2,4 6.5,8.2" fill="#6b6b6b"/></svg></div>
<div class="btn" style="left:389px;top:72px;"><svg width="14" height="13" style="position:absolute;left:0;top:0"><polygon points="2.8,4 10.2,4 6.5,8.2" fill="#6b6b6b"/></svg></div>
<div class="btn" style="left:447px;top:72px;"><svg width="14" height="13" style="position:absolute;left:0;top:0"><polygon points="2.8,4 10.2,4 6.5,8.2" fill="#6b6b6b"/></svg></div>
<div class="btn" style="left:505px;top:72px;"><svg width="14" height="13" style="position:absolute;left:0;top:0"><polygon points="2.8,4 10.2,4 6.5,8.2" fill="#6b6b6b"/></svg></div>
<div class="btn" style="left:563px;top:72px;"><svg width="14" height="13" style="position:absolute;left:0;top:0"><polygon points="2.8,4 10.2,4 6.5,8.2" fill="#6b6b6b"/></svg></div>
<div class="btn" style="left:621px;top:72px;"><svg width="14" height="13" style="position:absolute;left:0;top:0"><polygon points="2.8,4 10.2,4 6.5,8.2" fill="#6b6b6b"/></svg></div>
<div class="btn" style="left:679px;top:72px;"><svg width="14" height="13" style="position:absolute;left:0;top:0"><polygon points="2.8,4 10.2,4 6.5,8.2" fill="#6b6b6b"/></svg></div>
<div class="btn" style="left:737px;top:72px;"><svg width="14" height="13" style="position:absolute;left:0;top:0"><polygon points="2.8,4 10.2,4 6.5,8.2" fill="#6b6b6b"/></svg></div>
<div class="btn" style="left:795px;top:72px;"><svg width="14" height="13" style="position:absolute;left:0;top:0"><polygon points="2.8,4 10.2,4 6.5,8.2" fill="#6b6b6b"/></svg></div>
<div class="btn" style="left:867px;top:72px;"><svg width="14" height="13" style="position:absolute;left:0;top:0"><polygon points="2.8,4 10.2,4 6.5,8.2" fill="#6b6b6b"/></svg></div>
<div class="btn" style="left:939px;top:72px;"><svg width="14" height="13" style="position:absolute;left:0;top:0"><polygon points="2.8,4 10.2,4 6.5,8.2" fill="#6b6b6b"/></svg></div>
<div class="btn" style="left:1011px;top:72px;"><svg width="14" height="13" style="position:absolute;left:0;top:0"><polygon points="2.8,4 10.2,4 6.5,8.2" fill="#6b6b6b"/></svg></div>
<div class="r" style="left:57px;top:6px;width:1px;height:469px;background:#9b9b9b;"></div>
<div class="r" style="left:0px;top:0px;width:995px;height:26px;background:#666666;"></div>
<div class="r" style="left:290px;top:6px;width:57px;height:19px;background:#262626;"></div>
<div class="r" style="left:289px;top:25px;width:59px;height:2px;background:#217346;"></div>
<div class="r" style="left:4px;top:6px;width:1px;height:20px;background:#b8b8b8;"></div>
<div class="r" style="left:55px;top:6px;width:1px;height:20px;background:#b8b8b8;"></div>
<div class="r" style="left:57px;top:6px;width:1px;height:20px;background:#9b9b9b;"></div>
<div class="r" style="left:115px;top:6px;width:1px;height:20px;background:#b8b8b8;"></div>
<div class="r" style="left:173px;top:6px;width:1px;height:20px;background:#b8b8b8;"></div>
<div class="r" style="left:231px;top:6px;width:1px;height:20px;background:#b8b8b8;"></div>
<div class="r" style="left:289px;top:6px;width:1px;height:20px;background:#b8b8b8;"></div>
<div class="r" style="left:347px;top:6px;width:1px;height:20px;background:#b8b8b8;"></div>
<div class="r" style="left:405px;top:6px;width:1px;height:20px;background:#b8b8b8;"></div>
<div class="r" style="left:463px;top:6px;width:1px;height:20px;background:#b8b8b8;"></div>
<div class="r" style="left:521px;top:6px;width:1px;height:20px;background:#b8b8b8;"></div>
<div class="r" style="left:579px;top:6px;width:1px;height:20px;background:#b8b8b8;"></div>
<div class="r" style="left:637px;top:6px;width:1px;height:20px;background:#b8b8b8;"></div>
<div class="r" style="left:695px;top:6px;width:1px;height:20px;background:#b8b8b8;"></div>
<div class="r" style="left:753px;top:6px;width:1px;height:20px;background:#b8b8b8;"></div>
<div class="r" style="left:811px;top:6px;width:1px;height:20px;background:#b8b8b8;"></div>
<div class="r" style="left:883px;top:6px;width:1px;height:20px;background:#b8b8b8;"></div>
<div class="r" style="left:955px;top:6px;width:1px;height:20px;background:#b8b8b8;"></div>
<div class="r" style="left:1027px;top:6px;width:1px;height:20px;background:#b8b8b8;"></div>
<div class="t" style="left:5px;width:52px;top:10.92px;font-size:13.8px;line-height:13.8px;font-weight:normal;color:#ffffff;text-align:center;">F</div>
<div class="t" style="left:58px;width:57px;top:10.92px;font-size:13.8px;line-height:13.8px;font-weight:normal;color:#ffffff;text-align:center;">AE</div>
<div class="t" style="left:116px;width:57px;top:10.92px;font-size:13.8px;line-height:13.8px;font-weight:normal;color:#ffffff;text-align:center;">AF</div>
<div class="t" style="left:174px;width:57px;top:10.92px;font-size:13.8px;line-height:13.8px;font-weight:normal;color:#ffffff;text-align:center;">AG</div>
<div class="t" style="left:232px;width:57px;top:10.92px;font-size:13.8px;line-height:13.8px;font-weight:normal;color:#ffffff;text-align:center;">AH</div>
<div class="t" style="left:290px;width:57px;top:10.92px;font-size:13.8px;line-height:13.8px;font-weight:normal;color:#ffffff;text-align:center;">AI</div>
<div class="t" style="left:348px;width:57px;top:10.92px;font-size:13.8px;line-height:13.8px;font-weight:normal;color:#ffffff;text-align:center;">AJ</div>
<div class="t" style="left:406px;width:57px;top:10.92px;font-size:13.8px;line-height:13.8px;font-weight:normal;color:#ffffff;text-align:center;">AK</div>
<div class="t" style="left:464px;width:57px;top:10.92px;font-size:13.8px;line-height:13.8px;font-weight:normal;color:#ffffff;text-align:center;">AL</div>
<div class="t" style="left:522px;width:57px;top:10.92px;font-size:13.8px;line-height:13.8px;font-weight:normal;color:#ffffff;text-align:center;">AM</div>
<div class="t" style="left:580px;width:57px;top:10.92px;font-size:13.8px;line-height:13.8px;font-weight:normal;color:#ffffff;text-align:center;">AN</div>
<div class="t" style="left:638px;width:57px;top:10.92px;font-size:13.8px;line-height:13.8px;font-weight:normal;color:#ffffff;text-align:center;">AO</div>
<div class="t" style="left:696px;width:57px;top:10.92px;font-size:13.8px;line-height:13.8px;font-weight:normal;color:#ffffff;text-align:center;">AP</div>
<div class="t" style="left:754px;width:57px;top:10.92px;font-size:13.8px;line-height:13.8px;font-weight:normal;color:#ffffff;text-align:center;">AQ</div>
<div class="t" style="left:812px;width:71px;top:10.92px;font-size:13.8px;line-height:13.8px;font-weight:normal;color:#ffffff;text-align:center;">AR</div>
<div class="t" style="left:884px;width:71px;top:10.92px;font-size:13.8px;line-height:13.8px;font-weight:normal;color:#ffffff;text-align:center;">AS</div>
<div class="t" style="left:956px;width:71px;top:10.92px;font-size:13.8px;line-height:13.8px;font-weight:normal;color:#ffffff;text-align:center;">AT</div>
<div class="r" style="left:288px;top:189px;width:57px;height:19px;border:2px solid #217346;background:transparent"></div>
<div class="r" style="left:344px;top:207px;width:6px;height:6px;background:#ffffff;"></div>
<div class="r" style="left:345px;top:208px;width:5px;height:5px;background:#217346;"></div>
<div class="r" style="left:66px;top:29px;width:900px;height:37px;border:3px solid #ff0000;border-radius:3px;background:transparent"></div>
<div class="r" style="left:11px;top:80px;width:48px;height:24px;border:3px solid #ff0000;border-radius:3px;background:transparent"></div>
<div class="r" style="left:287px;top:80px;width:58px;height:37px;border:3px solid #ff0000;border-radius:3px;background:transparent"></div>
<div class="r" style="left:990px;top:0px;width:5px;height:26px;background:#666666;"></div>
<div class="r" style="left:990px;top:26px;width:1px;height:449px;background:#9a9a9a;"></div>
<div class="r" style="left:991px;top:26px;width:3px;height:449px;background:#6a6a6a;"></div>
<div class="r" style="left:994px;top:8px;width:1px;height:467px;background:#383838;"></div>
<div class="r" style="left:993px;top:8px;width:1px;height:18px;background:#505050;"></div>
</body></html>
